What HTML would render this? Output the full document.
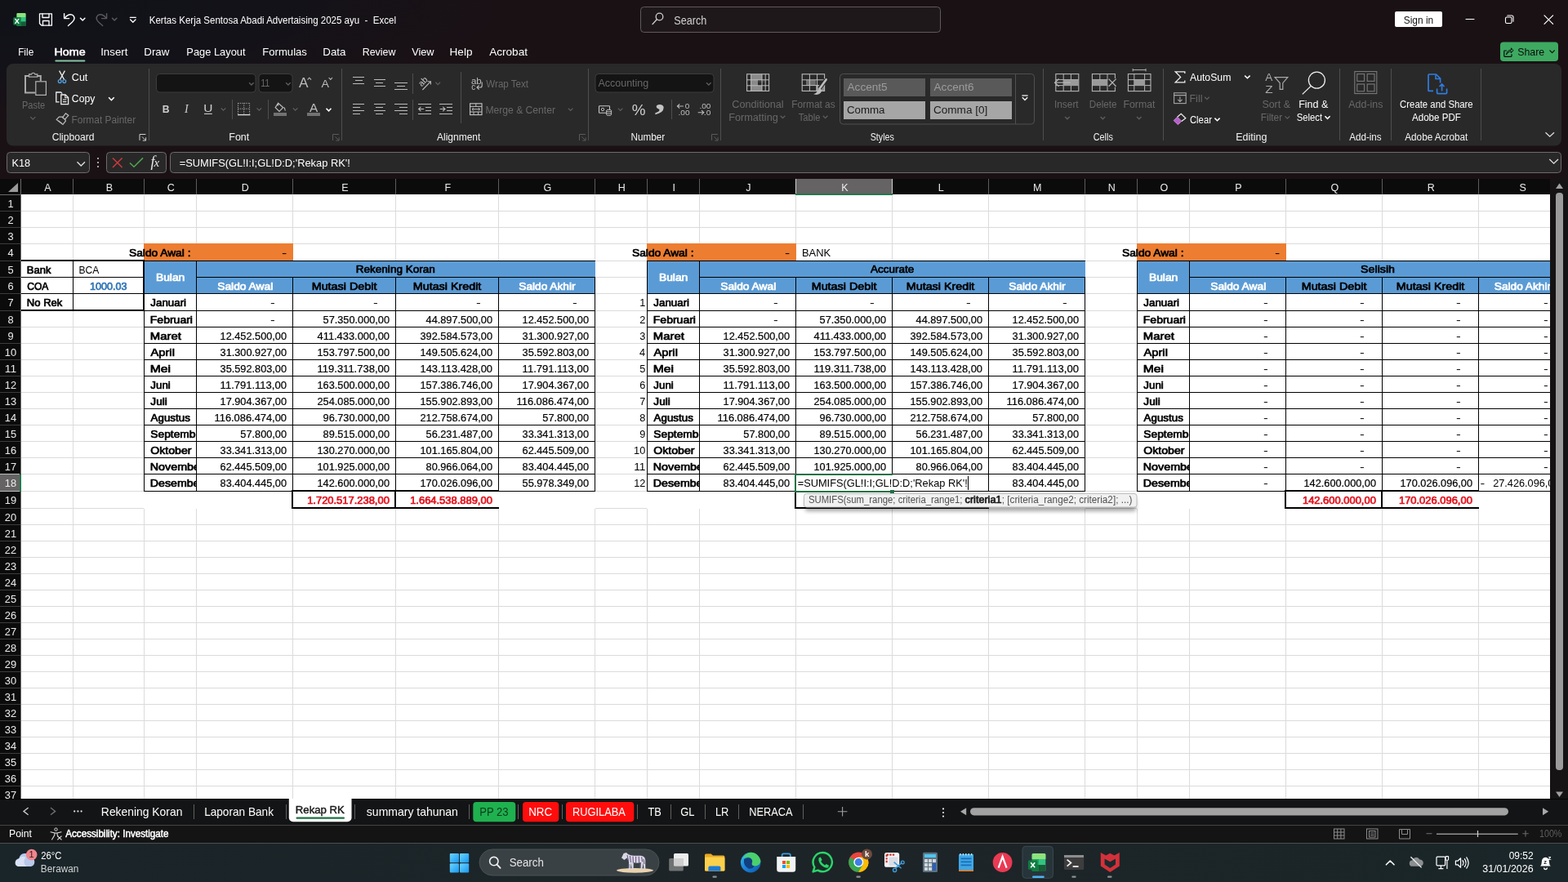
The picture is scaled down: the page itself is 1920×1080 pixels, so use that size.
<!DOCTYPE html>
<html lang="id"><head><meta charset="utf-8"><title>Kertas Kerja Sentosa Abadi Advertaising 2025 ayu - Excel</title>
<style>
html,body{margin:0;padding:0;background:#1a1115;width:1920px;height:1080px;overflow:hidden}
svg{display:block;position:absolute;left:0;top:0;will-change:transform}
text{font-family:"Liberation Sans", sans-serif;white-space:pre}
</style></head>
<body>
<svg width="1920" height="1080" viewBox="0 0 1920 1080">
<defs>
<radialGradient id="mica" cx="0" cy="0" r="1" gradientUnits="userSpaceOnUse" gradientTransform="translate(0 0) scale(620 150)"><stop offset="0" stop-color="#101218"/><stop offset="0.55" stop-color="#131219"/><stop offset="1" stop-color="#1a1115"/></radialGradient>
<clipPath id="c1"><rect x="26" y="238" width="1872" height="740"/></clipPath>
<clipPath id="c2"><rect x="177" y="359" width="63" height="242"/></clipPath>
<clipPath id="c3"><rect x="793" y="359" width="63" height="242"/></clipPath>
<clipPath id="c4"><rect x="1393" y="359" width="63" height="242"/></clipPath>
<filter id="tsh" x="-5%" y="-50%" width="110%" height="250%"><feGaussianBlur stdDeviation="2.6"/></filter>
<clipPath id="c5"><rect x="0" y="239" width="26" height="739"/></clipPath>
<linearGradient id="tb" x1="0" y1="0" x2="1" y2="0"><stop offset="0" stop-color="#1a2529"/><stop offset="0.55" stop-color="#1d2427"/><stop offset="1" stop-color="#1a2629"/></linearGradient>
<linearGradient id="win" x1="0" y1="0" x2="1" y2="1"><stop offset="0" stop-color="#6bd6ff"/><stop offset="1" stop-color="#1a96f0"/></linearGradient>
<linearGradient id="edg" x1="0" y1="0" x2="1" y2="1"><stop offset="0" stop-color="#35c1f1"/><stop offset="0.5" stop-color="#1b80d8"/><stop offset="1" stop-color="#0c59a4"/></linearGradient>
</defs>
<rect x="0" y="0" width="1920" height="1080" fill="#1a1115"/>
<rect x="0" y="0" width="700" height="180" fill="url(#mica)"/>
<g id="sheet">
<rect x="26" y="238" width="1872" height="740" fill="#ffffff" shape-rendering="crispEdges"/>
<g clip-path="url(#c1)">
<rect x="89" y="238" width="1" height="740" fill="#dbdbdb" shape-rendering="crispEdges"/>
<rect x="176" y="238" width="1" height="740" fill="#dbdbdb" shape-rendering="crispEdges"/>
<rect x="240" y="238" width="1" height="740" fill="#dbdbdb" shape-rendering="crispEdges"/>
<rect x="358" y="238" width="1" height="740" fill="#dbdbdb" shape-rendering="crispEdges"/>
<rect x="484" y="238" width="1" height="740" fill="#dbdbdb" shape-rendering="crispEdges"/>
<rect x="610" y="238" width="1" height="740" fill="#dbdbdb" shape-rendering="crispEdges"/>
<rect x="728" y="238" width="1" height="740" fill="#dbdbdb" shape-rendering="crispEdges"/>
<rect x="792" y="238" width="1" height="740" fill="#dbdbdb" shape-rendering="crispEdges"/>
<rect x="856" y="238" width="1" height="740" fill="#dbdbdb" shape-rendering="crispEdges"/>
<rect x="974" y="238" width="1" height="740" fill="#dbdbdb" shape-rendering="crispEdges"/>
<rect x="1092" y="238" width="1" height="740" fill="#dbdbdb" shape-rendering="crispEdges"/>
<rect x="1210" y="238" width="1" height="740" fill="#dbdbdb" shape-rendering="crispEdges"/>
<rect x="1328" y="238" width="1" height="740" fill="#dbdbdb" shape-rendering="crispEdges"/>
<rect x="1392" y="238" width="1" height="740" fill="#dbdbdb" shape-rendering="crispEdges"/>
<rect x="1456" y="238" width="1" height="740" fill="#dbdbdb" shape-rendering="crispEdges"/>
<rect x="1574" y="238" width="1" height="740" fill="#dbdbdb" shape-rendering="crispEdges"/>
<rect x="1692" y="238" width="1" height="740" fill="#dbdbdb" shape-rendering="crispEdges"/>
<rect x="1810" y="238" width="1" height="740" fill="#dbdbdb" shape-rendering="crispEdges"/>
<rect x="26" y="258" width="1872" height="1" fill="#dbdbdb" shape-rendering="crispEdges"/>
<rect x="26" y="278" width="1872" height="1" fill="#dbdbdb" shape-rendering="crispEdges"/>
<rect x="26" y="298" width="1872" height="1" fill="#dbdbdb" shape-rendering="crispEdges"/>
<rect x="26" y="319" width="1872" height="1" fill="#dbdbdb" shape-rendering="crispEdges"/>
<rect x="26" y="339" width="1872" height="1" fill="#dbdbdb" shape-rendering="crispEdges"/>
<rect x="26" y="359" width="1872" height="1" fill="#dbdbdb" shape-rendering="crispEdges"/>
<rect x="26" y="380" width="1872" height="1" fill="#dbdbdb" shape-rendering="crispEdges"/>
<rect x="26" y="400" width="1872" height="1" fill="#dbdbdb" shape-rendering="crispEdges"/>
<rect x="26" y="420" width="1872" height="1" fill="#dbdbdb" shape-rendering="crispEdges"/>
<rect x="26" y="440" width="1872" height="1" fill="#dbdbdb" shape-rendering="crispEdges"/>
<rect x="26" y="460" width="1872" height="1" fill="#dbdbdb" shape-rendering="crispEdges"/>
<rect x="26" y="480" width="1872" height="1" fill="#dbdbdb" shape-rendering="crispEdges"/>
<rect x="26" y="500" width="1872" height="1" fill="#dbdbdb" shape-rendering="crispEdges"/>
<rect x="26" y="520" width="1872" height="1" fill="#dbdbdb" shape-rendering="crispEdges"/>
<rect x="26" y="540" width="1872" height="1" fill="#dbdbdb" shape-rendering="crispEdges"/>
<rect x="26" y="560" width="1872" height="1" fill="#dbdbdb" shape-rendering="crispEdges"/>
<rect x="26" y="580" width="1872" height="1" fill="#dbdbdb" shape-rendering="crispEdges"/>
<rect x="26" y="601" width="1872" height="1" fill="#dbdbdb" shape-rendering="crispEdges"/>
<rect x="26" y="622" width="1872" height="1" fill="#dbdbdb" shape-rendering="crispEdges"/>
<rect x="26" y="642" width="1872" height="1" fill="#dbdbdb" shape-rendering="crispEdges"/>
<rect x="26" y="662" width="1872" height="1" fill="#dbdbdb" shape-rendering="crispEdges"/>
<rect x="26" y="682" width="1872" height="1" fill="#dbdbdb" shape-rendering="crispEdges"/>
<rect x="26" y="702" width="1872" height="1" fill="#dbdbdb" shape-rendering="crispEdges"/>
<rect x="26" y="722" width="1872" height="1" fill="#dbdbdb" shape-rendering="crispEdges"/>
<rect x="26" y="742" width="1872" height="1" fill="#dbdbdb" shape-rendering="crispEdges"/>
<rect x="26" y="762" width="1872" height="1" fill="#dbdbdb" shape-rendering="crispEdges"/>
<rect x="26" y="782" width="1872" height="1" fill="#dbdbdb" shape-rendering="crispEdges"/>
<rect x="26" y="802" width="1872" height="1" fill="#dbdbdb" shape-rendering="crispEdges"/>
<rect x="26" y="822" width="1872" height="1" fill="#dbdbdb" shape-rendering="crispEdges"/>
<rect x="26" y="842" width="1872" height="1" fill="#dbdbdb" shape-rendering="crispEdges"/>
<rect x="26" y="862" width="1872" height="1" fill="#dbdbdb" shape-rendering="crispEdges"/>
<rect x="26" y="882" width="1872" height="1" fill="#dbdbdb" shape-rendering="crispEdges"/>
<rect x="26" y="902" width="1872" height="1" fill="#dbdbdb" shape-rendering="crispEdges"/>
<rect x="26" y="922" width="1872" height="1" fill="#dbdbdb" shape-rendering="crispEdges"/>
<rect x="26" y="942" width="1872" height="1" fill="#dbdbdb" shape-rendering="crispEdges"/>
<rect x="26" y="962" width="1872" height="1" fill="#dbdbdb" shape-rendering="crispEdges"/>
<rect x="26" y="982" width="1872" height="1" fill="#dbdbdb" shape-rendering="crispEdges"/>
<rect x="176" y="602" width="553" height="21" fill="#ffffff" shape-rendering="crispEdges"/>
<rect x="792" y="602" width="537" height="21" fill="#ffffff" shape-rendering="crispEdges"/>
<rect x="1392" y="602" width="507" height="21" fill="#ffffff" shape-rendering="crispEdges"/>
<rect x="176" y="298" width="183" height="21" fill="#ed7d31" shape-rendering="crispEdges"/>
<rect x="792" y="298" width="183" height="21" fill="#ed7d31" shape-rendering="crispEdges"/>
<rect x="1392" y="298" width="183" height="21" fill="#ed7d31" shape-rendering="crispEdges"/>
<rect x="176" y="319" width="553" height="41" fill="#5b9bd5" shape-rendering="crispEdges"/>
<rect x="176" y="359" width="553" height="243" fill="#ffffff" shape-rendering="crispEdges"/>
<rect x="240" y="339" width="489" height="1" fill="#000000" shape-rendering="crispEdges"/>
<rect x="176" y="359" width="553" height="1" fill="#000000" shape-rendering="crispEdges"/>
<rect x="176" y="380" width="553" height="1" fill="#000000" shape-rendering="crispEdges"/>
<rect x="176" y="400" width="553" height="1" fill="#000000" shape-rendering="crispEdges"/>
<rect x="176" y="420" width="553" height="1" fill="#000000" shape-rendering="crispEdges"/>
<rect x="176" y="440" width="553" height="1" fill="#000000" shape-rendering="crispEdges"/>
<rect x="176" y="460" width="553" height="1" fill="#000000" shape-rendering="crispEdges"/>
<rect x="176" y="480" width="553" height="1" fill="#000000" shape-rendering="crispEdges"/>
<rect x="176" y="500" width="553" height="1" fill="#000000" shape-rendering="crispEdges"/>
<rect x="176" y="520" width="553" height="1" fill="#000000" shape-rendering="crispEdges"/>
<rect x="176" y="540" width="553" height="1" fill="#000000" shape-rendering="crispEdges"/>
<rect x="176" y="560" width="553" height="1" fill="#000000" shape-rendering="crispEdges"/>
<rect x="176" y="580" width="553" height="1" fill="#000000" shape-rendering="crispEdges"/>
<rect x="176" y="601" width="553" height="1" fill="#000000" shape-rendering="crispEdges"/>
<rect x="176" y="319" width="553" height="1" fill="#000000" shape-rendering="crispEdges"/>
<rect x="176" y="319" width="1" height="283" fill="#000000" shape-rendering="crispEdges"/>
<rect x="240" y="319" width="1" height="283" fill="#000000" shape-rendering="crispEdges"/>
<rect x="358" y="339" width="1" height="263" fill="#000000" shape-rendering="crispEdges"/>
<rect x="484" y="339" width="1" height="263" fill="#000000" shape-rendering="crispEdges"/>
<rect x="610" y="339" width="1" height="263" fill="#000000" shape-rendering="crispEdges"/>
<rect x="728" y="339" width="1" height="263" fill="#000000" shape-rendering="crispEdges"/>
<text x="190.92" y="343.8" font-size="13.2" fill="#fff" textLength="35.42" lengthAdjust="spacingAndGlyphs" stroke="#fff" stroke-width="0.72" stroke-linejoin="round">Bulan</text>
<text x="435.75" y="333.8" font-size="13.2" fill="#000" textLength="97.07" lengthAdjust="spacingAndGlyphs" stroke="#000" stroke-width="0.72" stroke-linejoin="round">Rekening Koran</text>
<text x="266.19" y="354.6" font-size="13.2" fill="#fff" textLength="68.11" lengthAdjust="spacingAndGlyphs" stroke="#fff" stroke-width="0.72" stroke-linejoin="round">Saldo Awal</text>
<text x="381.68" y="354.6" font-size="13.2" fill="#000" textLength="79.76" lengthAdjust="spacingAndGlyphs" stroke="#000" stroke-width="0.72" stroke-linejoin="round">Mutasi Debit</text>
<text x="505.79" y="354.6" font-size="13.2" fill="#000" textLength="83.56" lengthAdjust="spacingAndGlyphs" stroke="#000" stroke-width="0.72" stroke-linejoin="round">Mutasi Kredit</text>
<text x="635.30" y="354.6" font-size="13.2" fill="#fff" textLength="69.22" lengthAdjust="spacingAndGlyphs" stroke="#fff" stroke-width="0.72" stroke-linejoin="round">Saldo Akhir</text>
<text x="184.35" y="374.7" font-size="13.2" fill="#000" textLength="43.69" lengthAdjust="spacingAndGlyphs" clip-path="url(#c2)" stroke="#000" stroke-width="0.72" stroke-linejoin="round">Januari</text>
<text x="183.81" y="395.7" font-size="13.2" fill="#000" textLength="52.17" lengthAdjust="spacingAndGlyphs" clip-path="url(#c2)" stroke="#000" stroke-width="0.72" stroke-linejoin="round">Februari</text>
<text x="183.74" y="415.7" font-size="13.2" fill="#000" textLength="38.11" lengthAdjust="spacingAndGlyphs" clip-path="url(#c2)" stroke="#000" stroke-width="0.72" stroke-linejoin="round">Maret</text>
<text x="184.53" y="435.7" font-size="13.2" fill="#000" textLength="29.39" lengthAdjust="spacingAndGlyphs" clip-path="url(#c2)" stroke="#000" stroke-width="0.72" stroke-linejoin="round">April</text>
<text x="183.67" y="455.7" font-size="13.2" fill="#000" textLength="25.33" lengthAdjust="spacingAndGlyphs" clip-path="url(#c2)" stroke="#000" stroke-width="0.72" stroke-linejoin="round">Mei</text>
<text x="184.35" y="475.7" font-size="13.2" fill="#000" textLength="24.49" lengthAdjust="spacingAndGlyphs" clip-path="url(#c2)" stroke="#000" stroke-width="0.72" stroke-linejoin="round">Juni</text>
<text x="184.35" y="495.7" font-size="13.2" fill="#000" textLength="20.51" lengthAdjust="spacingAndGlyphs" clip-path="url(#c2)" stroke="#000" stroke-width="0.72" stroke-linejoin="round">Juli</text>
<text x="184.63" y="515.7" font-size="13.2" fill="#000" textLength="48.19" lengthAdjust="spacingAndGlyphs" clip-path="url(#c2)" stroke="#000" stroke-width="0.72" stroke-linejoin="round">Agustus</text>
<text x="184.33" y="535.7" font-size="13.2" fill="#000" textLength="67.47" lengthAdjust="spacingAndGlyphs" clip-path="url(#c2)" stroke="#000" stroke-width="0.72" stroke-linejoin="round">September</text>
<text x="184.29" y="555.7" font-size="13.2" fill="#000" textLength="50.18" lengthAdjust="spacingAndGlyphs" clip-path="url(#c2)" stroke="#000" stroke-width="0.72" stroke-linejoin="round">Oktober</text>
<text x="183.79" y="575.7" font-size="13.2" fill="#000" textLength="66.00" lengthAdjust="spacingAndGlyphs" clip-path="url(#c2)" stroke="#000" stroke-width="0.72" stroke-linejoin="round">November</text>
<text x="183.80" y="595.7" font-size="13.2" fill="#000" textLength="65.42" lengthAdjust="spacingAndGlyphs" clip-path="url(#c2)" stroke="#000" stroke-width="0.72" stroke-linejoin="round">Desember</text>
<text x="331.14" y="375.2" font-size="12.2" fill="#000" textLength="5.73" lengthAdjust="spacingAndGlyphs">-</text>
<text x="331.14" y="396.2" font-size="12.2" fill="#000" textLength="5.73" lengthAdjust="spacingAndGlyphs">-</text>
<text x="269.62" y="415.7" font-size="12.2" fill="#000" textLength="81.37" lengthAdjust="spacingAndGlyphs" stroke="#000" stroke-width="0.2" stroke-linejoin="round">12.452.500,00</text>
<text x="269.62" y="435.7" font-size="12.2" fill="#000" textLength="81.37" lengthAdjust="spacingAndGlyphs" stroke="#000" stroke-width="0.2" stroke-linejoin="round">31.300.927,00</text>
<text x="269.62" y="455.7" font-size="12.2" fill="#000" textLength="81.37" lengthAdjust="spacingAndGlyphs" stroke="#000" stroke-width="0.2" stroke-linejoin="round">35.592.803,00</text>
<text x="269.62" y="475.7" font-size="12.2" fill="#000" textLength="81.37" lengthAdjust="spacingAndGlyphs" stroke="#000" stroke-width="0.2" stroke-linejoin="round">11.791.113,00</text>
<text x="269.62" y="495.7" font-size="12.2" fill="#000" textLength="81.37" lengthAdjust="spacingAndGlyphs" stroke="#000" stroke-width="0.2" stroke-linejoin="round">17.904.367,00</text>
<text x="262.55" y="515.7" font-size="12.2" fill="#000" textLength="88.45" lengthAdjust="spacingAndGlyphs" stroke="#000" stroke-width="0.2" stroke-linejoin="round">116.086.474,00</text>
<text x="294.39" y="535.7" font-size="12.2" fill="#000" textLength="56.61" lengthAdjust="spacingAndGlyphs" stroke="#000" stroke-width="0.2" stroke-linejoin="round">57.800,00</text>
<text x="269.62" y="555.7" font-size="12.2" fill="#000" textLength="81.37" lengthAdjust="spacingAndGlyphs" stroke="#000" stroke-width="0.2" stroke-linejoin="round">33.341.313,00</text>
<text x="269.62" y="575.7" font-size="12.2" fill="#000" textLength="81.37" lengthAdjust="spacingAndGlyphs" stroke="#000" stroke-width="0.2" stroke-linejoin="round">62.445.509,00</text>
<text x="269.62" y="595.7" font-size="12.2" fill="#000" textLength="81.37" lengthAdjust="spacingAndGlyphs" stroke="#000" stroke-width="0.2" stroke-linejoin="round">83.404.445,00</text>
<text x="457.14" y="375.2" font-size="12.2" fill="#000" textLength="5.73" lengthAdjust="spacingAndGlyphs">-</text>
<text x="395.62" y="395.7" font-size="12.2" fill="#000" textLength="81.37" lengthAdjust="spacingAndGlyphs" stroke="#000" stroke-width="0.2" stroke-linejoin="round">57.350.000,00</text>
<text x="388.55" y="415.7" font-size="12.2" fill="#000" textLength="88.45" lengthAdjust="spacingAndGlyphs" stroke="#000" stroke-width="0.2" stroke-linejoin="round">411.433.000,00</text>
<text x="388.55" y="435.7" font-size="12.2" fill="#000" textLength="88.45" lengthAdjust="spacingAndGlyphs" stroke="#000" stroke-width="0.2" stroke-linejoin="round">153.797.500,00</text>
<text x="388.55" y="455.7" font-size="12.2" fill="#000" textLength="88.45" lengthAdjust="spacingAndGlyphs" stroke="#000" stroke-width="0.2" stroke-linejoin="round">119.311.738,00</text>
<text x="388.55" y="475.7" font-size="12.2" fill="#000" textLength="88.45" lengthAdjust="spacingAndGlyphs" stroke="#000" stroke-width="0.2" stroke-linejoin="round">163.500.000,00</text>
<text x="388.55" y="495.7" font-size="12.2" fill="#000" textLength="88.45" lengthAdjust="spacingAndGlyphs" stroke="#000" stroke-width="0.2" stroke-linejoin="round">254.085.000,00</text>
<text x="395.62" y="515.7" font-size="12.2" fill="#000" textLength="81.37" lengthAdjust="spacingAndGlyphs" stroke="#000" stroke-width="0.2" stroke-linejoin="round">96.730.000,00</text>
<text x="395.62" y="535.7" font-size="12.2" fill="#000" textLength="81.37" lengthAdjust="spacingAndGlyphs" stroke="#000" stroke-width="0.2" stroke-linejoin="round">89.515.000,00</text>
<text x="388.55" y="555.7" font-size="12.2" fill="#000" textLength="88.45" lengthAdjust="spacingAndGlyphs" stroke="#000" stroke-width="0.2" stroke-linejoin="round">130.270.000,00</text>
<text x="388.55" y="575.7" font-size="12.2" fill="#000" textLength="88.45" lengthAdjust="spacingAndGlyphs" stroke="#000" stroke-width="0.2" stroke-linejoin="round">101.925.000,00</text>
<text x="388.55" y="595.7" font-size="12.2" fill="#000" textLength="88.45" lengthAdjust="spacingAndGlyphs" stroke="#000" stroke-width="0.2" stroke-linejoin="round">142.600.000,00</text>
<text x="583.14" y="375.2" font-size="12.2" fill="#000" textLength="5.73" lengthAdjust="spacingAndGlyphs">-</text>
<text x="521.62" y="395.7" font-size="12.2" fill="#000" textLength="81.37" lengthAdjust="spacingAndGlyphs" stroke="#000" stroke-width="0.2" stroke-linejoin="round">44.897.500,00</text>
<text x="514.55" y="415.7" font-size="12.2" fill="#000" textLength="88.45" lengthAdjust="spacingAndGlyphs" stroke="#000" stroke-width="0.2" stroke-linejoin="round">392.584.573,00</text>
<text x="514.55" y="435.7" font-size="12.2" fill="#000" textLength="88.45" lengthAdjust="spacingAndGlyphs" stroke="#000" stroke-width="0.2" stroke-linejoin="round">149.505.624,00</text>
<text x="514.55" y="455.7" font-size="12.2" fill="#000" textLength="88.45" lengthAdjust="spacingAndGlyphs" stroke="#000" stroke-width="0.2" stroke-linejoin="round">143.113.428,00</text>
<text x="514.55" y="475.7" font-size="12.2" fill="#000" textLength="88.45" lengthAdjust="spacingAndGlyphs" stroke="#000" stroke-width="0.2" stroke-linejoin="round">157.386.746,00</text>
<text x="514.55" y="495.7" font-size="12.2" fill="#000" textLength="88.45" lengthAdjust="spacingAndGlyphs" stroke="#000" stroke-width="0.2" stroke-linejoin="round">155.902.893,00</text>
<text x="514.55" y="515.7" font-size="12.2" fill="#000" textLength="88.45" lengthAdjust="spacingAndGlyphs" stroke="#000" stroke-width="0.2" stroke-linejoin="round">212.758.674,00</text>
<text x="521.62" y="535.7" font-size="12.2" fill="#000" textLength="81.37" lengthAdjust="spacingAndGlyphs" stroke="#000" stroke-width="0.2" stroke-linejoin="round">56.231.487,00</text>
<text x="514.55" y="555.7" font-size="12.2" fill="#000" textLength="88.45" lengthAdjust="spacingAndGlyphs" stroke="#000" stroke-width="0.2" stroke-linejoin="round">101.165.804,00</text>
<text x="521.62" y="575.7" font-size="12.2" fill="#000" textLength="81.37" lengthAdjust="spacingAndGlyphs" stroke="#000" stroke-width="0.2" stroke-linejoin="round">80.966.064,00</text>
<text x="514.55" y="595.7" font-size="12.2" fill="#000" textLength="88.45" lengthAdjust="spacingAndGlyphs" stroke="#000" stroke-width="0.2" stroke-linejoin="round">170.026.096,00</text>
<text x="701.14" y="375.2" font-size="12.2" fill="#000" textLength="5.73" lengthAdjust="spacingAndGlyphs">-</text>
<text x="639.62" y="395.7" font-size="12.2" fill="#000" textLength="81.37" lengthAdjust="spacingAndGlyphs" stroke="#000" stroke-width="0.2" stroke-linejoin="round">12.452.500,00</text>
<text x="639.62" y="415.7" font-size="12.2" fill="#000" textLength="81.37" lengthAdjust="spacingAndGlyphs" stroke="#000" stroke-width="0.2" stroke-linejoin="round">31.300.927,00</text>
<text x="639.62" y="435.7" font-size="12.2" fill="#000" textLength="81.37" lengthAdjust="spacingAndGlyphs" stroke="#000" stroke-width="0.2" stroke-linejoin="round">35.592.803,00</text>
<text x="639.62" y="455.7" font-size="12.2" fill="#000" textLength="81.37" lengthAdjust="spacingAndGlyphs" stroke="#000" stroke-width="0.2" stroke-linejoin="round">11.791.113,00</text>
<text x="639.62" y="475.7" font-size="12.2" fill="#000" textLength="81.37" lengthAdjust="spacingAndGlyphs" stroke="#000" stroke-width="0.2" stroke-linejoin="round">17.904.367,00</text>
<text x="632.55" y="495.7" font-size="12.2" fill="#000" textLength="88.45" lengthAdjust="spacingAndGlyphs" stroke="#000" stroke-width="0.2" stroke-linejoin="round">116.086.474,00</text>
<text x="664.39" y="515.7" font-size="12.2" fill="#000" textLength="56.61" lengthAdjust="spacingAndGlyphs" stroke="#000" stroke-width="0.2" stroke-linejoin="round">57.800,00</text>
<text x="639.62" y="535.7" font-size="12.2" fill="#000" textLength="81.37" lengthAdjust="spacingAndGlyphs" stroke="#000" stroke-width="0.2" stroke-linejoin="round">33.341.313,00</text>
<text x="639.62" y="555.7" font-size="12.2" fill="#000" textLength="81.37" lengthAdjust="spacingAndGlyphs" stroke="#000" stroke-width="0.2" stroke-linejoin="round">62.445.509,00</text>
<text x="639.62" y="575.7" font-size="12.2" fill="#000" textLength="81.37" lengthAdjust="spacingAndGlyphs" stroke="#000" stroke-width="0.2" stroke-linejoin="round">83.404.445,00</text>
<text x="639.62" y="595.7" font-size="12.2" fill="#000" textLength="81.37" lengthAdjust="spacingAndGlyphs" stroke="#000" stroke-width="0.2" stroke-linejoin="round">55.978.349,00</text>
<rect x="357" y="600" width="254" height="2" fill="#000000" shape-rendering="crispEdges"/>
<rect x="357" y="621" width="254" height="2" fill="#000000" shape-rendering="crispEdges"/>
<rect x="357" y="601" width="2" height="21" fill="#000000" shape-rendering="crispEdges"/>
<rect x="483" y="601" width="2" height="21" fill="#000000" shape-rendering="crispEdges"/>
<text x="376.16" y="616.7" font-size="12.4" fill="#e4141f" textLength="100.69" lengthAdjust="spacingAndGlyphs" stroke="#e4141f" stroke-width="0.72" stroke-linejoin="round">1.720.517.238,00</text>
<text x="502.16" y="616.7" font-size="12.4" fill="#e4141f" textLength="100.69" lengthAdjust="spacingAndGlyphs" stroke="#e4141f" stroke-width="0.72" stroke-linejoin="round">1.664.538.889,00</text>
<rect x="792" y="319" width="537" height="41" fill="#5b9bd5" shape-rendering="crispEdges"/>
<rect x="792" y="359" width="537" height="243" fill="#ffffff" shape-rendering="crispEdges"/>
<rect x="856" y="339" width="473" height="1" fill="#000000" shape-rendering="crispEdges"/>
<rect x="792" y="359" width="537" height="1" fill="#000000" shape-rendering="crispEdges"/>
<rect x="792" y="380" width="537" height="1" fill="#000000" shape-rendering="crispEdges"/>
<rect x="792" y="400" width="537" height="1" fill="#000000" shape-rendering="crispEdges"/>
<rect x="792" y="420" width="537" height="1" fill="#000000" shape-rendering="crispEdges"/>
<rect x="792" y="440" width="537" height="1" fill="#000000" shape-rendering="crispEdges"/>
<rect x="792" y="460" width="537" height="1" fill="#000000" shape-rendering="crispEdges"/>
<rect x="792" y="480" width="537" height="1" fill="#000000" shape-rendering="crispEdges"/>
<rect x="792" y="500" width="537" height="1" fill="#000000" shape-rendering="crispEdges"/>
<rect x="792" y="520" width="537" height="1" fill="#000000" shape-rendering="crispEdges"/>
<rect x="792" y="540" width="537" height="1" fill="#000000" shape-rendering="crispEdges"/>
<rect x="792" y="560" width="537" height="1" fill="#000000" shape-rendering="crispEdges"/>
<rect x="792" y="580" width="537" height="1" fill="#000000" shape-rendering="crispEdges"/>
<rect x="792" y="601" width="537" height="1" fill="#000000" shape-rendering="crispEdges"/>
<rect x="792" y="319" width="537" height="1" fill="#000000" shape-rendering="crispEdges"/>
<rect x="792" y="319" width="1" height="283" fill="#000000" shape-rendering="crispEdges"/>
<rect x="856" y="319" width="1" height="283" fill="#000000" shape-rendering="crispEdges"/>
<rect x="974" y="339" width="1" height="263" fill="#000000" shape-rendering="crispEdges"/>
<rect x="1092" y="339" width="1" height="263" fill="#000000" shape-rendering="crispEdges"/>
<rect x="1210" y="339" width="1" height="263" fill="#000000" shape-rendering="crispEdges"/>
<rect x="1328" y="339" width="1" height="263" fill="#000000" shape-rendering="crispEdges"/>
<text x="806.92" y="343.8" font-size="13.2" fill="#fff" textLength="35.42" lengthAdjust="spacingAndGlyphs" stroke="#fff" stroke-width="0.72" stroke-linejoin="round">Bulan</text>
<text x="1066.08" y="333.8" font-size="13.2" fill="#000" textLength="53.21" lengthAdjust="spacingAndGlyphs" stroke="#000" stroke-width="0.72" stroke-linejoin="round">Accurate</text>
<text x="882.19" y="354.6" font-size="13.2" fill="#fff" textLength="68.11" lengthAdjust="spacingAndGlyphs" stroke="#fff" stroke-width="0.72" stroke-linejoin="round">Saldo Awal</text>
<text x="993.68" y="354.6" font-size="13.2" fill="#000" textLength="79.76" lengthAdjust="spacingAndGlyphs" stroke="#000" stroke-width="0.72" stroke-linejoin="round">Mutasi Debit</text>
<text x="1109.79" y="354.6" font-size="13.2" fill="#000" textLength="83.56" lengthAdjust="spacingAndGlyphs" stroke="#000" stroke-width="0.72" stroke-linejoin="round">Mutasi Kredit</text>
<text x="1235.30" y="354.6" font-size="13.2" fill="#fff" textLength="69.22" lengthAdjust="spacingAndGlyphs" stroke="#fff" stroke-width="0.72" stroke-linejoin="round">Saldo Akhir</text>
<text x="800.35" y="374.7" font-size="13.2" fill="#000" textLength="43.69" lengthAdjust="spacingAndGlyphs" clip-path="url(#c3)" stroke="#000" stroke-width="0.72" stroke-linejoin="round">Januari</text>
<text x="799.81" y="395.7" font-size="13.2" fill="#000" textLength="52.17" lengthAdjust="spacingAndGlyphs" clip-path="url(#c3)" stroke="#000" stroke-width="0.72" stroke-linejoin="round">Februari</text>
<text x="799.74" y="415.7" font-size="13.2" fill="#000" textLength="38.11" lengthAdjust="spacingAndGlyphs" clip-path="url(#c3)" stroke="#000" stroke-width="0.72" stroke-linejoin="round">Maret</text>
<text x="800.53" y="435.7" font-size="13.2" fill="#000" textLength="29.39" lengthAdjust="spacingAndGlyphs" clip-path="url(#c3)" stroke="#000" stroke-width="0.72" stroke-linejoin="round">April</text>
<text x="799.67" y="455.7" font-size="13.2" fill="#000" textLength="25.33" lengthAdjust="spacingAndGlyphs" clip-path="url(#c3)" stroke="#000" stroke-width="0.72" stroke-linejoin="round">Mei</text>
<text x="800.35" y="475.7" font-size="13.2" fill="#000" textLength="24.49" lengthAdjust="spacingAndGlyphs" clip-path="url(#c3)" stroke="#000" stroke-width="0.72" stroke-linejoin="round">Juni</text>
<text x="800.35" y="495.7" font-size="13.2" fill="#000" textLength="20.51" lengthAdjust="spacingAndGlyphs" clip-path="url(#c3)" stroke="#000" stroke-width="0.72" stroke-linejoin="round">Juli</text>
<text x="800.63" y="515.7" font-size="13.2" fill="#000" textLength="48.19" lengthAdjust="spacingAndGlyphs" clip-path="url(#c3)" stroke="#000" stroke-width="0.72" stroke-linejoin="round">Agustus</text>
<text x="800.33" y="535.7" font-size="13.2" fill="#000" textLength="67.47" lengthAdjust="spacingAndGlyphs" clip-path="url(#c3)" stroke="#000" stroke-width="0.72" stroke-linejoin="round">September</text>
<text x="800.29" y="555.7" font-size="13.2" fill="#000" textLength="50.18" lengthAdjust="spacingAndGlyphs" clip-path="url(#c3)" stroke="#000" stroke-width="0.72" stroke-linejoin="round">Oktober</text>
<text x="799.79" y="575.7" font-size="13.2" fill="#000" textLength="66.00" lengthAdjust="spacingAndGlyphs" clip-path="url(#c3)" stroke="#000" stroke-width="0.72" stroke-linejoin="round">November</text>
<text x="799.80" y="595.7" font-size="13.2" fill="#000" textLength="65.42" lengthAdjust="spacingAndGlyphs" clip-path="url(#c3)" stroke="#000" stroke-width="0.72" stroke-linejoin="round">Desember</text>
<text x="947.14" y="375.2" font-size="12.2" fill="#000" textLength="5.73" lengthAdjust="spacingAndGlyphs">-</text>
<text x="947.14" y="396.2" font-size="12.2" fill="#000" textLength="5.73" lengthAdjust="spacingAndGlyphs">-</text>
<text x="885.62" y="415.7" font-size="12.2" fill="#000" textLength="81.37" lengthAdjust="spacingAndGlyphs" stroke="#000" stroke-width="0.2" stroke-linejoin="round">12.452.500,00</text>
<text x="885.62" y="435.7" font-size="12.2" fill="#000" textLength="81.37" lengthAdjust="spacingAndGlyphs" stroke="#000" stroke-width="0.2" stroke-linejoin="round">31.300.927,00</text>
<text x="885.62" y="455.7" font-size="12.2" fill="#000" textLength="81.37" lengthAdjust="spacingAndGlyphs" stroke="#000" stroke-width="0.2" stroke-linejoin="round">35.592.803,00</text>
<text x="885.62" y="475.7" font-size="12.2" fill="#000" textLength="81.37" lengthAdjust="spacingAndGlyphs" stroke="#000" stroke-width="0.2" stroke-linejoin="round">11.791.113,00</text>
<text x="885.62" y="495.7" font-size="12.2" fill="#000" textLength="81.37" lengthAdjust="spacingAndGlyphs" stroke="#000" stroke-width="0.2" stroke-linejoin="round">17.904.367,00</text>
<text x="878.55" y="515.7" font-size="12.2" fill="#000" textLength="88.45" lengthAdjust="spacingAndGlyphs" stroke="#000" stroke-width="0.2" stroke-linejoin="round">116.086.474,00</text>
<text x="910.39" y="535.7" font-size="12.2" fill="#000" textLength="56.61" lengthAdjust="spacingAndGlyphs" stroke="#000" stroke-width="0.2" stroke-linejoin="round">57.800,00</text>
<text x="885.62" y="555.7" font-size="12.2" fill="#000" textLength="81.37" lengthAdjust="spacingAndGlyphs" stroke="#000" stroke-width="0.2" stroke-linejoin="round">33.341.313,00</text>
<text x="885.62" y="575.7" font-size="12.2" fill="#000" textLength="81.37" lengthAdjust="spacingAndGlyphs" stroke="#000" stroke-width="0.2" stroke-linejoin="round">62.445.509,00</text>
<text x="885.62" y="595.7" font-size="12.2" fill="#000" textLength="81.37" lengthAdjust="spacingAndGlyphs" stroke="#000" stroke-width="0.2" stroke-linejoin="round">83.404.445,00</text>
<text x="1065.14" y="375.2" font-size="12.2" fill="#000" textLength="5.73" lengthAdjust="spacingAndGlyphs">-</text>
<text x="1003.62" y="395.7" font-size="12.2" fill="#000" textLength="81.37" lengthAdjust="spacingAndGlyphs" stroke="#000" stroke-width="0.2" stroke-linejoin="round">57.350.000,00</text>
<text x="996.55" y="415.7" font-size="12.2" fill="#000" textLength="88.45" lengthAdjust="spacingAndGlyphs" stroke="#000" stroke-width="0.2" stroke-linejoin="round">411.433.000,00</text>
<text x="996.55" y="435.7" font-size="12.2" fill="#000" textLength="88.45" lengthAdjust="spacingAndGlyphs" stroke="#000" stroke-width="0.2" stroke-linejoin="round">153.797.500,00</text>
<text x="996.55" y="455.7" font-size="12.2" fill="#000" textLength="88.45" lengthAdjust="spacingAndGlyphs" stroke="#000" stroke-width="0.2" stroke-linejoin="round">119.311.738,00</text>
<text x="996.55" y="475.7" font-size="12.2" fill="#000" textLength="88.45" lengthAdjust="spacingAndGlyphs" stroke="#000" stroke-width="0.2" stroke-linejoin="round">163.500.000,00</text>
<text x="996.55" y="495.7" font-size="12.2" fill="#000" textLength="88.45" lengthAdjust="spacingAndGlyphs" stroke="#000" stroke-width="0.2" stroke-linejoin="round">254.085.000,00</text>
<text x="1003.62" y="515.7" font-size="12.2" fill="#000" textLength="81.37" lengthAdjust="spacingAndGlyphs" stroke="#000" stroke-width="0.2" stroke-linejoin="round">96.730.000,00</text>
<text x="1003.62" y="535.7" font-size="12.2" fill="#000" textLength="81.37" lengthAdjust="spacingAndGlyphs" stroke="#000" stroke-width="0.2" stroke-linejoin="round">89.515.000,00</text>
<text x="996.55" y="555.7" font-size="12.2" fill="#000" textLength="88.45" lengthAdjust="spacingAndGlyphs" stroke="#000" stroke-width="0.2" stroke-linejoin="round">130.270.000,00</text>
<text x="996.55" y="575.7" font-size="12.2" fill="#000" textLength="88.45" lengthAdjust="spacingAndGlyphs" stroke="#000" stroke-width="0.2" stroke-linejoin="round">101.925.000,00</text>
<text x="1183.14" y="375.2" font-size="12.2" fill="#000" textLength="5.73" lengthAdjust="spacingAndGlyphs">-</text>
<text x="1121.62" y="395.7" font-size="12.2" fill="#000" textLength="81.37" lengthAdjust="spacingAndGlyphs" stroke="#000" stroke-width="0.2" stroke-linejoin="round">44.897.500,00</text>
<text x="1114.55" y="415.7" font-size="12.2" fill="#000" textLength="88.45" lengthAdjust="spacingAndGlyphs" stroke="#000" stroke-width="0.2" stroke-linejoin="round">392.584.573,00</text>
<text x="1114.55" y="435.7" font-size="12.2" fill="#000" textLength="88.45" lengthAdjust="spacingAndGlyphs" stroke="#000" stroke-width="0.2" stroke-linejoin="round">149.505.624,00</text>
<text x="1114.55" y="455.7" font-size="12.2" fill="#000" textLength="88.45" lengthAdjust="spacingAndGlyphs" stroke="#000" stroke-width="0.2" stroke-linejoin="round">143.113.428,00</text>
<text x="1114.55" y="475.7" font-size="12.2" fill="#000" textLength="88.45" lengthAdjust="spacingAndGlyphs" stroke="#000" stroke-width="0.2" stroke-linejoin="round">157.386.746,00</text>
<text x="1114.55" y="495.7" font-size="12.2" fill="#000" textLength="88.45" lengthAdjust="spacingAndGlyphs" stroke="#000" stroke-width="0.2" stroke-linejoin="round">155.902.893,00</text>
<text x="1114.55" y="515.7" font-size="12.2" fill="#000" textLength="88.45" lengthAdjust="spacingAndGlyphs" stroke="#000" stroke-width="0.2" stroke-linejoin="round">212.758.674,00</text>
<text x="1121.62" y="535.7" font-size="12.2" fill="#000" textLength="81.37" lengthAdjust="spacingAndGlyphs" stroke="#000" stroke-width="0.2" stroke-linejoin="round">56.231.487,00</text>
<text x="1114.55" y="555.7" font-size="12.2" fill="#000" textLength="88.45" lengthAdjust="spacingAndGlyphs" stroke="#000" stroke-width="0.2" stroke-linejoin="round">101.165.804,00</text>
<text x="1121.62" y="575.7" font-size="12.2" fill="#000" textLength="81.37" lengthAdjust="spacingAndGlyphs" stroke="#000" stroke-width="0.2" stroke-linejoin="round">80.966.064,00</text>
<text x="1301.14" y="375.2" font-size="12.2" fill="#000" textLength="5.73" lengthAdjust="spacingAndGlyphs">-</text>
<text x="1239.62" y="395.7" font-size="12.2" fill="#000" textLength="81.37" lengthAdjust="spacingAndGlyphs" stroke="#000" stroke-width="0.2" stroke-linejoin="round">12.452.500,00</text>
<text x="1239.62" y="415.7" font-size="12.2" fill="#000" textLength="81.37" lengthAdjust="spacingAndGlyphs" stroke="#000" stroke-width="0.2" stroke-linejoin="round">31.300.927,00</text>
<text x="1239.62" y="435.7" font-size="12.2" fill="#000" textLength="81.37" lengthAdjust="spacingAndGlyphs" stroke="#000" stroke-width="0.2" stroke-linejoin="round">35.592.803,00</text>
<text x="1239.62" y="455.7" font-size="12.2" fill="#000" textLength="81.37" lengthAdjust="spacingAndGlyphs" stroke="#000" stroke-width="0.2" stroke-linejoin="round">11.791.113,00</text>
<text x="1239.62" y="475.7" font-size="12.2" fill="#000" textLength="81.37" lengthAdjust="spacingAndGlyphs" stroke="#000" stroke-width="0.2" stroke-linejoin="round">17.904.367,00</text>
<text x="1232.55" y="495.7" font-size="12.2" fill="#000" textLength="88.45" lengthAdjust="spacingAndGlyphs" stroke="#000" stroke-width="0.2" stroke-linejoin="round">116.086.474,00</text>
<text x="1264.39" y="515.7" font-size="12.2" fill="#000" textLength="56.61" lengthAdjust="spacingAndGlyphs" stroke="#000" stroke-width="0.2" stroke-linejoin="round">57.800,00</text>
<text x="1239.62" y="535.7" font-size="12.2" fill="#000" textLength="81.37" lengthAdjust="spacingAndGlyphs" stroke="#000" stroke-width="0.2" stroke-linejoin="round">33.341.313,00</text>
<text x="1239.62" y="555.7" font-size="12.2" fill="#000" textLength="81.37" lengthAdjust="spacingAndGlyphs" stroke="#000" stroke-width="0.2" stroke-linejoin="round">62.445.509,00</text>
<text x="1239.62" y="575.7" font-size="12.2" fill="#000" textLength="81.37" lengthAdjust="spacingAndGlyphs" stroke="#000" stroke-width="0.2" stroke-linejoin="round">83.404.445,00</text>
<text x="1239.62" y="595.7" font-size="12.2" fill="#000" textLength="81.37" lengthAdjust="spacingAndGlyphs" stroke="#000" stroke-width="0.2" stroke-linejoin="round">83.404.445,00</text>
<rect x="1392" y="319" width="509" height="41" fill="#5b9bd5" shape-rendering="crispEdges"/>
<rect x="1392" y="359" width="509" height="243" fill="#ffffff" shape-rendering="crispEdges"/>
<rect x="1456" y="339" width="445" height="1" fill="#000000" shape-rendering="crispEdges"/>
<rect x="1392" y="359" width="509" height="1" fill="#000000" shape-rendering="crispEdges"/>
<rect x="1392" y="380" width="509" height="1" fill="#000000" shape-rendering="crispEdges"/>
<rect x="1392" y="400" width="509" height="1" fill="#000000" shape-rendering="crispEdges"/>
<rect x="1392" y="420" width="509" height="1" fill="#000000" shape-rendering="crispEdges"/>
<rect x="1392" y="440" width="509" height="1" fill="#000000" shape-rendering="crispEdges"/>
<rect x="1392" y="460" width="509" height="1" fill="#000000" shape-rendering="crispEdges"/>
<rect x="1392" y="480" width="509" height="1" fill="#000000" shape-rendering="crispEdges"/>
<rect x="1392" y="500" width="509" height="1" fill="#000000" shape-rendering="crispEdges"/>
<rect x="1392" y="520" width="509" height="1" fill="#000000" shape-rendering="crispEdges"/>
<rect x="1392" y="540" width="509" height="1" fill="#000000" shape-rendering="crispEdges"/>
<rect x="1392" y="560" width="509" height="1" fill="#000000" shape-rendering="crispEdges"/>
<rect x="1392" y="580" width="509" height="1" fill="#000000" shape-rendering="crispEdges"/>
<rect x="1392" y="601" width="509" height="1" fill="#000000" shape-rendering="crispEdges"/>
<rect x="1392" y="319" width="509" height="1" fill="#000000" shape-rendering="crispEdges"/>
<rect x="1392" y="319" width="1" height="283" fill="#000000" shape-rendering="crispEdges"/>
<rect x="1456" y="319" width="1" height="283" fill="#000000" shape-rendering="crispEdges"/>
<rect x="1574" y="339" width="1" height="263" fill="#000000" shape-rendering="crispEdges"/>
<rect x="1692" y="339" width="1" height="263" fill="#000000" shape-rendering="crispEdges"/>
<rect x="1810" y="339" width="1" height="263" fill="#000000" shape-rendering="crispEdges"/>
<rect x="1917" y="339" width="1" height="263" fill="#000000" shape-rendering="crispEdges"/>
<text x="1406.92" y="343.8" font-size="13.2" fill="#fff" textLength="35.42" lengthAdjust="spacingAndGlyphs" stroke="#fff" stroke-width="0.72" stroke-linejoin="round">Bulan</text>
<text x="1666.11" y="333.8" font-size="13.2" fill="#000" textLength="41.85" lengthAdjust="spacingAndGlyphs" stroke="#000" stroke-width="0.72" stroke-linejoin="round">Selisih</text>
<text x="1482.19" y="354.6" font-size="13.2" fill="#fff" textLength="68.11" lengthAdjust="spacingAndGlyphs" stroke="#fff" stroke-width="0.72" stroke-linejoin="round">Saldo Awal</text>
<text x="1593.68" y="354.6" font-size="13.2" fill="#000" textLength="79.76" lengthAdjust="spacingAndGlyphs" stroke="#000" stroke-width="0.72" stroke-linejoin="round">Mutasi Debit</text>
<text x="1709.79" y="354.6" font-size="13.2" fill="#000" textLength="83.56" lengthAdjust="spacingAndGlyphs" stroke="#000" stroke-width="0.72" stroke-linejoin="round">Mutasi Kredit</text>
<text x="1829.80" y="354.6" font-size="13.2" fill="#fff" textLength="69.22" lengthAdjust="spacingAndGlyphs" stroke="#fff" stroke-width="0.72" stroke-linejoin="round">Saldo Akhir</text>
<text x="1400.35" y="374.7" font-size="13.2" fill="#000" textLength="43.69" lengthAdjust="spacingAndGlyphs" clip-path="url(#c4)" stroke="#000" stroke-width="0.72" stroke-linejoin="round">Januari</text>
<text x="1399.81" y="395.7" font-size="13.2" fill="#000" textLength="52.17" lengthAdjust="spacingAndGlyphs" clip-path="url(#c4)" stroke="#000" stroke-width="0.72" stroke-linejoin="round">Februari</text>
<text x="1399.74" y="415.7" font-size="13.2" fill="#000" textLength="38.11" lengthAdjust="spacingAndGlyphs" clip-path="url(#c4)" stroke="#000" stroke-width="0.72" stroke-linejoin="round">Maret</text>
<text x="1400.53" y="435.7" font-size="13.2" fill="#000" textLength="29.39" lengthAdjust="spacingAndGlyphs" clip-path="url(#c4)" stroke="#000" stroke-width="0.72" stroke-linejoin="round">April</text>
<text x="1399.67" y="455.7" font-size="13.2" fill="#000" textLength="25.33" lengthAdjust="spacingAndGlyphs" clip-path="url(#c4)" stroke="#000" stroke-width="0.72" stroke-linejoin="round">Mei</text>
<text x="1400.35" y="475.7" font-size="13.2" fill="#000" textLength="24.49" lengthAdjust="spacingAndGlyphs" clip-path="url(#c4)" stroke="#000" stroke-width="0.72" stroke-linejoin="round">Juni</text>
<text x="1400.35" y="495.7" font-size="13.2" fill="#000" textLength="20.51" lengthAdjust="spacingAndGlyphs" clip-path="url(#c4)" stroke="#000" stroke-width="0.72" stroke-linejoin="round">Juli</text>
<text x="1400.63" y="515.7" font-size="13.2" fill="#000" textLength="48.19" lengthAdjust="spacingAndGlyphs" clip-path="url(#c4)" stroke="#000" stroke-width="0.72" stroke-linejoin="round">Agustus</text>
<text x="1400.33" y="535.7" font-size="13.2" fill="#000" textLength="67.47" lengthAdjust="spacingAndGlyphs" clip-path="url(#c4)" stroke="#000" stroke-width="0.72" stroke-linejoin="round">September</text>
<text x="1400.29" y="555.7" font-size="13.2" fill="#000" textLength="50.18" lengthAdjust="spacingAndGlyphs" clip-path="url(#c4)" stroke="#000" stroke-width="0.72" stroke-linejoin="round">Oktober</text>
<text x="1399.79" y="575.7" font-size="13.2" fill="#000" textLength="66.00" lengthAdjust="spacingAndGlyphs" clip-path="url(#c4)" stroke="#000" stroke-width="0.72" stroke-linejoin="round">November</text>
<text x="1399.80" y="595.7" font-size="13.2" fill="#000" textLength="65.42" lengthAdjust="spacingAndGlyphs" clip-path="url(#c4)" stroke="#000" stroke-width="0.72" stroke-linejoin="round">Desember</text>
<text x="1547.14" y="375.2" font-size="12.2" fill="#000" textLength="5.73" lengthAdjust="spacingAndGlyphs">-</text>
<text x="1547.14" y="396.2" font-size="12.2" fill="#000" textLength="5.73" lengthAdjust="spacingAndGlyphs">-</text>
<text x="1547.14" y="416.2" font-size="12.2" fill="#000" textLength="5.73" lengthAdjust="spacingAndGlyphs">-</text>
<text x="1547.14" y="436.2" font-size="12.2" fill="#000" textLength="5.73" lengthAdjust="spacingAndGlyphs">-</text>
<text x="1547.14" y="456.2" font-size="12.2" fill="#000" textLength="5.73" lengthAdjust="spacingAndGlyphs">-</text>
<text x="1547.14" y="476.2" font-size="12.2" fill="#000" textLength="5.73" lengthAdjust="spacingAndGlyphs">-</text>
<text x="1547.14" y="496.2" font-size="12.2" fill="#000" textLength="5.73" lengthAdjust="spacingAndGlyphs">-</text>
<text x="1547.14" y="516.2" font-size="12.2" fill="#000" textLength="5.73" lengthAdjust="spacingAndGlyphs">-</text>
<text x="1547.14" y="536.2" font-size="12.2" fill="#000" textLength="5.73" lengthAdjust="spacingAndGlyphs">-</text>
<text x="1547.14" y="556.2" font-size="12.2" fill="#000" textLength="5.73" lengthAdjust="spacingAndGlyphs">-</text>
<text x="1547.14" y="576.2" font-size="12.2" fill="#000" textLength="5.73" lengthAdjust="spacingAndGlyphs">-</text>
<text x="1547.14" y="596.2" font-size="12.2" fill="#000" textLength="5.73" lengthAdjust="spacingAndGlyphs">-</text>
<text x="1665.14" y="375.2" font-size="12.2" fill="#000" textLength="5.73" lengthAdjust="spacingAndGlyphs">-</text>
<text x="1665.14" y="396.2" font-size="12.2" fill="#000" textLength="5.73" lengthAdjust="spacingAndGlyphs">-</text>
<text x="1665.14" y="416.2" font-size="12.2" fill="#000" textLength="5.73" lengthAdjust="spacingAndGlyphs">-</text>
<text x="1665.14" y="436.2" font-size="12.2" fill="#000" textLength="5.73" lengthAdjust="spacingAndGlyphs">-</text>
<text x="1665.14" y="456.2" font-size="12.2" fill="#000" textLength="5.73" lengthAdjust="spacingAndGlyphs">-</text>
<text x="1665.14" y="476.2" font-size="12.2" fill="#000" textLength="5.73" lengthAdjust="spacingAndGlyphs">-</text>
<text x="1665.14" y="496.2" font-size="12.2" fill="#000" textLength="5.73" lengthAdjust="spacingAndGlyphs">-</text>
<text x="1665.14" y="516.2" font-size="12.2" fill="#000" textLength="5.73" lengthAdjust="spacingAndGlyphs">-</text>
<text x="1665.14" y="536.2" font-size="12.2" fill="#000" textLength="5.73" lengthAdjust="spacingAndGlyphs">-</text>
<text x="1665.14" y="556.2" font-size="12.2" fill="#000" textLength="5.73" lengthAdjust="spacingAndGlyphs">-</text>
<text x="1665.14" y="576.2" font-size="12.2" fill="#000" textLength="5.73" lengthAdjust="spacingAndGlyphs">-</text>
<text x="1596.55" y="595.7" font-size="12.2" fill="#000" textLength="88.45" lengthAdjust="spacingAndGlyphs" stroke="#000" stroke-width="0.2" stroke-linejoin="round">142.600.000,00</text>
<text x="1783.14" y="375.2" font-size="12.2" fill="#000" textLength="5.73" lengthAdjust="spacingAndGlyphs">-</text>
<text x="1783.14" y="396.2" font-size="12.2" fill="#000" textLength="5.73" lengthAdjust="spacingAndGlyphs">-</text>
<text x="1783.14" y="416.2" font-size="12.2" fill="#000" textLength="5.73" lengthAdjust="spacingAndGlyphs">-</text>
<text x="1783.14" y="436.2" font-size="12.2" fill="#000" textLength="5.73" lengthAdjust="spacingAndGlyphs">-</text>
<text x="1783.14" y="456.2" font-size="12.2" fill="#000" textLength="5.73" lengthAdjust="spacingAndGlyphs">-</text>
<text x="1783.14" y="476.2" font-size="12.2" fill="#000" textLength="5.73" lengthAdjust="spacingAndGlyphs">-</text>
<text x="1783.14" y="496.2" font-size="12.2" fill="#000" textLength="5.73" lengthAdjust="spacingAndGlyphs">-</text>
<text x="1783.14" y="516.2" font-size="12.2" fill="#000" textLength="5.73" lengthAdjust="spacingAndGlyphs">-</text>
<text x="1783.14" y="536.2" font-size="12.2" fill="#000" textLength="5.73" lengthAdjust="spacingAndGlyphs">-</text>
<text x="1783.14" y="556.2" font-size="12.2" fill="#000" textLength="5.73" lengthAdjust="spacingAndGlyphs">-</text>
<text x="1783.14" y="576.2" font-size="12.2" fill="#000" textLength="5.73" lengthAdjust="spacingAndGlyphs">-</text>
<text x="1714.55" y="595.7" font-size="12.2" fill="#000" textLength="88.45" lengthAdjust="spacingAndGlyphs" stroke="#000" stroke-width="0.2" stroke-linejoin="round">170.026.096,00</text>
<text x="1890.14" y="375.2" font-size="12.2" fill="#000" textLength="5.73" lengthAdjust="spacingAndGlyphs">-</text>
<text x="1890.14" y="396.2" font-size="12.2" fill="#000" textLength="5.73" lengthAdjust="spacingAndGlyphs">-</text>
<text x="1890.14" y="416.2" font-size="12.2" fill="#000" textLength="5.73" lengthAdjust="spacingAndGlyphs">-</text>
<text x="1890.14" y="436.2" font-size="12.2" fill="#000" textLength="5.73" lengthAdjust="spacingAndGlyphs">-</text>
<text x="1890.14" y="456.2" font-size="12.2" fill="#000" textLength="5.73" lengthAdjust="spacingAndGlyphs">-</text>
<text x="1890.14" y="476.2" font-size="12.2" fill="#000" textLength="5.73" lengthAdjust="spacingAndGlyphs">-</text>
<text x="1890.14" y="496.2" font-size="12.2" fill="#000" textLength="5.73" lengthAdjust="spacingAndGlyphs">-</text>
<text x="1890.14" y="516.2" font-size="12.2" fill="#000" textLength="5.73" lengthAdjust="spacingAndGlyphs">-</text>
<text x="1890.14" y="536.2" font-size="12.2" fill="#000" textLength="5.73" lengthAdjust="spacingAndGlyphs">-</text>
<text x="1890.14" y="556.2" font-size="12.2" fill="#000" textLength="5.73" lengthAdjust="spacingAndGlyphs">-</text>
<text x="1890.14" y="576.2" font-size="12.2" fill="#000" textLength="5.73" lengthAdjust="spacingAndGlyphs">-</text>
<text x="1812.44" y="596.2" font-size="12.2" fill="#000" textLength="5.73" lengthAdjust="spacingAndGlyphs">-</text>
<text x="1828.16" y="595.7" font-size="12.2" fill="#000" textLength="81.37" lengthAdjust="spacingAndGlyphs">27.426.096,00</text>
<rect x="1573" y="600" width="238" height="2" fill="#000000" shape-rendering="crispEdges"/>
<rect x="1573" y="621" width="238" height="2" fill="#000000" shape-rendering="crispEdges"/>
<rect x="1573" y="601" width="2" height="21" fill="#000000" shape-rendering="crispEdges"/>
<rect x="1691" y="601" width="2" height="21" fill="#000000" shape-rendering="crispEdges"/>
<text x="1594.94" y="616.7" font-size="12.4" fill="#e4141f" textLength="89.90" lengthAdjust="spacingAndGlyphs" stroke="#e4141f" stroke-width="0.72" stroke-linejoin="round">142.600.000,00</text>
<text x="1712.94" y="616.7" font-size="12.4" fill="#e4141f" textLength="89.90" lengthAdjust="spacingAndGlyphs" stroke="#e4141f" stroke-width="0.72" stroke-linejoin="round">170.026.096,00</text>
<text x="158.04" y="313.7" font-size="13.2" fill="#000" textLength="75.44" lengthAdjust="spacingAndGlyphs" stroke="#000" stroke-width="0.72" stroke-linejoin="round">Saldo Awal :</text>
<text x="344.96" y="314" font-size="12.2" fill="#000" textLength="6.27" lengthAdjust="spacingAndGlyphs">-</text>
<text x="774.04" y="313.7" font-size="13.2" fill="#000" textLength="75.44" lengthAdjust="spacingAndGlyphs" stroke="#000" stroke-width="0.72" stroke-linejoin="round">Saldo Awal :</text>
<text x="960.96" y="314" font-size="12.2" fill="#000" textLength="6.27" lengthAdjust="spacingAndGlyphs">-</text>
<text x="1374.04" y="313.7" font-size="13.2" fill="#000" textLength="75.44" lengthAdjust="spacingAndGlyphs" stroke="#000" stroke-width="0.72" stroke-linejoin="round">Saldo Awal :</text>
<text x="1560.96" y="314" font-size="12.2" fill="#000" textLength="6.27" lengthAdjust="spacingAndGlyphs">-</text>
<text x="981.94" y="313.7" font-size="12.8" fill="#000" textLength="35.21" lengthAdjust="spacingAndGlyphs">BANK</text>
<rect x="26" y="318" width="151" height="2" fill="#000000" shape-rendering="crispEdges"/>
<rect x="26" y="379" width="151" height="2" fill="#000000" shape-rendering="crispEdges"/>
<rect x="175" y="318" width="2" height="63" fill="#000000" shape-rendering="crispEdges"/>
<rect x="89" y="320" width="1" height="59" fill="#000000" shape-rendering="crispEdges"/>
<rect x="26" y="339" width="149" height="1" fill="#000000" shape-rendering="crispEdges"/>
<rect x="26" y="359" width="149" height="1" fill="#000000" shape-rendering="crispEdges"/>
<rect x="27" y="320" width="62" height="19" fill="#fff" shape-rendering="crispEdges"/>
<rect x="90" y="320" width="85" height="19" fill="#fff" shape-rendering="crispEdges"/>
<text x="32.80" y="334.7" font-size="13.2" fill="#000" textLength="29.58" lengthAdjust="spacingAndGlyphs" stroke="#000" stroke-width="0.72" stroke-linejoin="round">Bank</text>
<text x="33.25" y="354.7" font-size="13.2" fill="#000" textLength="26.17" lengthAdjust="spacingAndGlyphs" stroke="#000" stroke-width="0.72" stroke-linejoin="round">COA</text>
<text x="32.79" y="374.7" font-size="13.2" fill="#000" textLength="43.63" lengthAdjust="spacingAndGlyphs" stroke="#000" stroke-width="0.72" stroke-linejoin="round">No Rek</text>
<text x="96.41" y="334.7" font-size="12.2" fill="#000" textLength="24.87" lengthAdjust="spacingAndGlyphs">BCA</text>
<text x="110.00" y="354.7" font-size="13.2" fill="#2e75b6" textLength="45.60" lengthAdjust="spacingAndGlyphs" stroke="#2e75b6" stroke-width="0.72" stroke-linejoin="round">1000.03</text>
<text x="783.34" y="374.7" font-size="12.2" fill="#000" textLength="7.08" lengthAdjust="spacingAndGlyphs">1</text>
<text x="783.36" y="395.7" font-size="12.2" fill="#000" textLength="7.08" lengthAdjust="spacingAndGlyphs">2</text>
<text x="783.28" y="415.7" font-size="12.2" fill="#000" textLength="7.08" lengthAdjust="spacingAndGlyphs">3</text>
<text x="783.10" y="435.7" font-size="12.2" fill="#000" textLength="7.08" lengthAdjust="spacingAndGlyphs">4</text>
<text x="783.26" y="455.7" font-size="12.2" fill="#000" textLength="7.08" lengthAdjust="spacingAndGlyphs">5</text>
<text x="783.28" y="475.7" font-size="12.2" fill="#000" textLength="7.08" lengthAdjust="spacingAndGlyphs">6</text>
<text x="783.36" y="495.7" font-size="12.2" fill="#000" textLength="7.08" lengthAdjust="spacingAndGlyphs">7</text>
<text x="783.28" y="515.7" font-size="12.2" fill="#000" textLength="7.08" lengthAdjust="spacingAndGlyphs">8</text>
<text x="783.33" y="535.7" font-size="12.2" fill="#000" textLength="7.08" lengthAdjust="spacingAndGlyphs">9</text>
<text x="776.14" y="555.7" font-size="12.2" fill="#000" textLength="14.15" lengthAdjust="spacingAndGlyphs">10</text>
<text x="776.27" y="575.7" font-size="12.2" fill="#000" textLength="14.15" lengthAdjust="spacingAndGlyphs">11</text>
<text x="776.29" y="595.7" font-size="12.2" fill="#000" textLength="14.15" lengthAdjust="spacingAndGlyphs">12</text>
<rect x="976" y="582" width="233" height="19" fill="#ffffff" shape-rendering="crispEdges"/>
<rect x="973" y="580" width="120" height="2" fill="#1e7145" shape-rendering="crispEdges"/>
<rect x="973" y="580" width="2" height="23" fill="#1e7145" shape-rendering="crispEdges"/>
<rect x="973" y="601" width="120" height="2" fill="#1e7145" shape-rendering="crispEdges"/>
<rect x="1090" y="600" width="5" height="4" fill="#1e7145" shape-rendering="crispEdges"/>
<rect x="1093" y="580" width="118" height="1" fill="#000000" shape-rendering="crispEdges"/>
<rect x="1095" y="601" width="116" height="1" fill="#000000" shape-rendering="crispEdges"/>
<text x="976.67" y="595.7" font-size="12.2" fill="#000" textLength="208.09" lengthAdjust="spacingAndGlyphs">=SUMIFS(GL!I:I;GL!D:D;'Rekap RK'!</text>
<rect x="1185" y="583" width="1" height="17" fill="#000" shape-rendering="crispEdges"/>
<rect x="973" y="603" width="2" height="20" fill="#000000" shape-rendering="crispEdges"/>
<rect x="973" y="621" width="238" height="2" fill="#000000" shape-rendering="crispEdges"/>
<rect x="986" y="609" width="405" height="17" rx="3" fill="#000" opacity="0.34" filter="url(#tsh)"/>
<rect x="984.5" y="604.5" width="407.5" height="16.5" rx="3" fill="#f1f1f1" stroke="#bdbdbd" stroke-width="1"/>
<text x="989.88" y="615.6" font-size="12" fill="#505050" textLength="188.64" lengthAdjust="spacingAndGlyphs">SUMIFS(sum_range; criteria_range1;</text>
<text x="1181.62" y="615.6" font-size="12" fill="#1a1a1a" textLength="44.83" lengthAdjust="spacingAndGlyphs" stroke="#1a1a1a" stroke-width="0.72" stroke-linejoin="round">criteria1</text>
<text x="1226.75" y="615.6" font-size="12" fill="#505050" textLength="159.58" lengthAdjust="spacingAndGlyphs">; [criteria_range2; criteria2]; ...)</text>
</g>
</g>
<g id="headers">
<rect x="0" y="219" width="1898" height="19" fill="#0c0b0b" shape-rendering="crispEdges"/>
<rect x="0" y="238" width="26" height="740" fill="#0c0b0b" shape-rendering="crispEdges"/>
<rect x="0" y="238" width="26" height="1" fill="#6a6a6a" shape-rendering="crispEdges"/>
<rect x="25" y="219" width="1" height="759" fill="#6a6a6a" shape-rendering="crispEdges"/>
<path d="M22 224 L22 235 L10 235 Z" fill="#9a9a9a"/>
<rect x="974" y="219" width="119" height="19" fill="#656363" shape-rendering="crispEdges"/>
<rect x="974" y="219" width="1" height="19" fill="#d0d0d0" shape-rendering="crispEdges"/>
<rect x="1092" y="219" width="1" height="19" fill="#d0d0d0" shape-rendering="crispEdges"/>
<rect x="974" y="237" width="119" height="2" fill="#1f7a4d" shape-rendering="crispEdges"/>
<rect x="89" y="219" width="1" height="19" fill="#5c5c5c" shape-rendering="crispEdges"/>
<text x="54.13" y="233.8" font-size="12.5" fill="#ebebeb">A</text>
<rect x="176" y="219" width="1" height="19" fill="#5c5c5c" shape-rendering="crispEdges"/>
<text x="129.63" y="233.8" font-size="12.5" fill="#ebebeb">B</text>
<rect x="240" y="219" width="1" height="19" fill="#5c5c5c" shape-rendering="crispEdges"/>
<text x="204.79" y="233.8" font-size="12.5" fill="#ebebeb">C</text>
<rect x="358" y="219" width="1" height="19" fill="#5c5c5c" shape-rendering="crispEdges"/>
<text x="295.79" y="233.8" font-size="12.5" fill="#ebebeb">D</text>
<rect x="484" y="219" width="1" height="19" fill="#5c5c5c" shape-rendering="crispEdges"/>
<text x="418.13" y="233.8" font-size="12.5" fill="#ebebeb">E</text>
<rect x="610" y="219" width="1" height="19" fill="#5c5c5c" shape-rendering="crispEdges"/>
<text x="544.48" y="233.8" font-size="12.5" fill="#ebebeb">F</text>
<rect x="728" y="219" width="1" height="19" fill="#5c5c5c" shape-rendering="crispEdges"/>
<text x="665.44" y="233.8" font-size="12.5" fill="#ebebeb">G</text>
<rect x="792" y="219" width="1" height="19" fill="#5c5c5c" shape-rendering="crispEdges"/>
<text x="756.79" y="233.8" font-size="12.5" fill="#ebebeb">H</text>
<rect x="856" y="219" width="1" height="19" fill="#5c5c5c" shape-rendering="crispEdges"/>
<text x="823.56" y="233.8" font-size="12.5" fill="#ebebeb">I</text>
<text x="913.17" y="233.8" font-size="12.5" fill="#ebebeb">J</text>
<text x="1030.13" y="233.8" font-size="12.5" fill="#ebebeb">K</text>
<rect x="1210" y="219" width="1" height="19" fill="#5c5c5c" shape-rendering="crispEdges"/>
<text x="1148.82" y="233.8" font-size="12.5" fill="#ebebeb">L</text>
<rect x="1328" y="219" width="1" height="19" fill="#5c5c5c" shape-rendering="crispEdges"/>
<text x="1265.09" y="233.8" font-size="12.5" fill="#ebebeb">M</text>
<rect x="1392" y="219" width="1" height="19" fill="#5c5c5c" shape-rendering="crispEdges"/>
<text x="1356.79" y="233.8" font-size="12.5" fill="#ebebeb">N</text>
<rect x="1456" y="219" width="1" height="19" fill="#5c5c5c" shape-rendering="crispEdges"/>
<text x="1420.44" y="233.8" font-size="12.5" fill="#ebebeb">O</text>
<rect x="1574" y="219" width="1" height="19" fill="#5c5c5c" shape-rendering="crispEdges"/>
<text x="1512.13" y="233.8" font-size="12.5" fill="#ebebeb">P</text>
<rect x="1692" y="219" width="1" height="19" fill="#5c5c5c" shape-rendering="crispEdges"/>
<text x="1629.44" y="233.8" font-size="12.5" fill="#ebebeb">Q</text>
<rect x="1810" y="219" width="1" height="19" fill="#5c5c5c" shape-rendering="crispEdges"/>
<text x="1747.79" y="233.8" font-size="12.5" fill="#ebebeb">R</text>
<text x="1860.43" y="233.8" font-size="12.5" fill="#ebebeb">S</text>
<rect x="0" y="581" width="25" height="21" fill="#656363" shape-rendering="crispEdges"/>
<rect x="24" y="581" width="2" height="21" fill="#1f7a4d" shape-rendering="crispEdges"/>
<g clip-path="url(#c5)">
<rect x="0" y="258" width="25" height="1" fill="#3c3c3c" shape-rendering="crispEdges"/>
<text x="9.42" y="253.9" font-size="12.5" fill="#ebebeb" textLength="7.16" lengthAdjust="spacingAndGlyphs">1</text>
<rect x="0" y="278" width="25" height="1" fill="#3c3c3c" shape-rendering="crispEdges"/>
<text x="9.42" y="273.9" font-size="12.5" fill="#ebebeb" textLength="7.16" lengthAdjust="spacingAndGlyphs">2</text>
<rect x="0" y="298" width="25" height="1" fill="#3c3c3c" shape-rendering="crispEdges"/>
<text x="9.42" y="293.9" font-size="12.5" fill="#ebebeb" textLength="7.16" lengthAdjust="spacingAndGlyphs">3</text>
<rect x="0" y="319" width="25" height="1" fill="#3c3c3c" shape-rendering="crispEdges"/>
<text x="9.42" y="314.4" font-size="12.5" fill="#ebebeb" textLength="7.16" lengthAdjust="spacingAndGlyphs">4</text>
<rect x="0" y="339" width="25" height="1" fill="#3c3c3c" shape-rendering="crispEdges"/>
<text x="9.42" y="334.9" font-size="12.5" fill="#ebebeb" textLength="7.16" lengthAdjust="spacingAndGlyphs">5</text>
<rect x="0" y="359" width="25" height="1" fill="#3c3c3c" shape-rendering="crispEdges"/>
<text x="9.42" y="354.9" font-size="12.5" fill="#ebebeb" textLength="7.16" lengthAdjust="spacingAndGlyphs">6</text>
<rect x="0" y="380" width="25" height="1" fill="#3c3c3c" shape-rendering="crispEdges"/>
<text x="9.42" y="375.4" font-size="12.5" fill="#ebebeb" textLength="7.16" lengthAdjust="spacingAndGlyphs">7</text>
<rect x="0" y="400" width="25" height="1" fill="#3c3c3c" shape-rendering="crispEdges"/>
<text x="9.42" y="395.9" font-size="12.5" fill="#ebebeb" textLength="7.16" lengthAdjust="spacingAndGlyphs">8</text>
<rect x="0" y="420" width="25" height="1" fill="#3c3c3c" shape-rendering="crispEdges"/>
<text x="9.42" y="415.9" font-size="12.5" fill="#ebebeb" textLength="7.16" lengthAdjust="spacingAndGlyphs">9</text>
<rect x="0" y="440" width="25" height="1" fill="#3c3c3c" shape-rendering="crispEdges"/>
<text x="5.84" y="435.9" font-size="12.5" fill="#ebebeb" textLength="14.32" lengthAdjust="spacingAndGlyphs">10</text>
<rect x="0" y="460" width="25" height="1" fill="#3c3c3c" shape-rendering="crispEdges"/>
<text x="5.84" y="455.9" font-size="12.5" fill="#ebebeb" textLength="14.32" lengthAdjust="spacingAndGlyphs">11</text>
<rect x="0" y="480" width="25" height="1" fill="#3c3c3c" shape-rendering="crispEdges"/>
<text x="5.84" y="475.9" font-size="12.5" fill="#ebebeb" textLength="14.32" lengthAdjust="spacingAndGlyphs">12</text>
<rect x="0" y="500" width="25" height="1" fill="#3c3c3c" shape-rendering="crispEdges"/>
<text x="5.84" y="495.9" font-size="12.5" fill="#ebebeb" textLength="14.32" lengthAdjust="spacingAndGlyphs">13</text>
<rect x="0" y="520" width="25" height="1" fill="#3c3c3c" shape-rendering="crispEdges"/>
<text x="5.84" y="515.9" font-size="12.5" fill="#ebebeb" textLength="14.32" lengthAdjust="spacingAndGlyphs">14</text>
<rect x="0" y="540" width="25" height="1" fill="#3c3c3c" shape-rendering="crispEdges"/>
<text x="5.84" y="535.9" font-size="12.5" fill="#ebebeb" textLength="14.32" lengthAdjust="spacingAndGlyphs">15</text>
<rect x="0" y="560" width="25" height="1" fill="#3c3c3c" shape-rendering="crispEdges"/>
<text x="5.84" y="555.9" font-size="12.5" fill="#ebebeb" textLength="14.32" lengthAdjust="spacingAndGlyphs">16</text>
<rect x="0" y="580" width="24" height="1" fill="#bdbdbd" shape-rendering="crispEdges"/>
<text x="5.84" y="575.9" font-size="12.5" fill="#ebebeb" textLength="14.32" lengthAdjust="spacingAndGlyphs">17</text>
<rect x="0" y="601" width="24" height="1" fill="#bdbdbd" shape-rendering="crispEdges"/>
<text x="5.84" y="596.4" font-size="12.5" fill="#ebebeb" textLength="14.32" lengthAdjust="spacingAndGlyphs">18</text>
<rect x="0" y="622" width="25" height="1" fill="#3c3c3c" shape-rendering="crispEdges"/>
<text x="5.84" y="617.4" font-size="12.5" fill="#ebebeb" textLength="14.32" lengthAdjust="spacingAndGlyphs">19</text>
<rect x="0" y="642" width="25" height="1" fill="#3c3c3c" shape-rendering="crispEdges"/>
<text x="5.84" y="637.9" font-size="12.5" fill="#ebebeb" textLength="14.32" lengthAdjust="spacingAndGlyphs">20</text>
<rect x="0" y="662" width="25" height="1" fill="#3c3c3c" shape-rendering="crispEdges"/>
<text x="5.84" y="657.9" font-size="12.5" fill="#ebebeb" textLength="14.32" lengthAdjust="spacingAndGlyphs">21</text>
<rect x="0" y="682" width="25" height="1" fill="#3c3c3c" shape-rendering="crispEdges"/>
<text x="5.84" y="677.9" font-size="12.5" fill="#ebebeb" textLength="14.32" lengthAdjust="spacingAndGlyphs">22</text>
<rect x="0" y="702" width="25" height="1" fill="#3c3c3c" shape-rendering="crispEdges"/>
<text x="5.84" y="697.9" font-size="12.5" fill="#ebebeb" textLength="14.32" lengthAdjust="spacingAndGlyphs">23</text>
<rect x="0" y="722" width="25" height="1" fill="#3c3c3c" shape-rendering="crispEdges"/>
<text x="5.84" y="717.9" font-size="12.5" fill="#ebebeb" textLength="14.32" lengthAdjust="spacingAndGlyphs">24</text>
<rect x="0" y="742" width="25" height="1" fill="#3c3c3c" shape-rendering="crispEdges"/>
<text x="5.84" y="737.9" font-size="12.5" fill="#ebebeb" textLength="14.32" lengthAdjust="spacingAndGlyphs">25</text>
<rect x="0" y="762" width="25" height="1" fill="#3c3c3c" shape-rendering="crispEdges"/>
<text x="5.84" y="757.9" font-size="12.5" fill="#ebebeb" textLength="14.32" lengthAdjust="spacingAndGlyphs">26</text>
<rect x="0" y="782" width="25" height="1" fill="#3c3c3c" shape-rendering="crispEdges"/>
<text x="5.84" y="777.9" font-size="12.5" fill="#ebebeb" textLength="14.32" lengthAdjust="spacingAndGlyphs">27</text>
<rect x="0" y="802" width="25" height="1" fill="#3c3c3c" shape-rendering="crispEdges"/>
<text x="5.84" y="797.9" font-size="12.5" fill="#ebebeb" textLength="14.32" lengthAdjust="spacingAndGlyphs">28</text>
<rect x="0" y="822" width="25" height="1" fill="#3c3c3c" shape-rendering="crispEdges"/>
<text x="5.84" y="817.9" font-size="12.5" fill="#ebebeb" textLength="14.32" lengthAdjust="spacingAndGlyphs">29</text>
<rect x="0" y="842" width="25" height="1" fill="#3c3c3c" shape-rendering="crispEdges"/>
<text x="5.84" y="837.9" font-size="12.5" fill="#ebebeb" textLength="14.32" lengthAdjust="spacingAndGlyphs">30</text>
<rect x="0" y="862" width="25" height="1" fill="#3c3c3c" shape-rendering="crispEdges"/>
<text x="5.84" y="857.9" font-size="12.5" fill="#ebebeb" textLength="14.32" lengthAdjust="spacingAndGlyphs">31</text>
<rect x="0" y="882" width="25" height="1" fill="#3c3c3c" shape-rendering="crispEdges"/>
<text x="5.84" y="877.9" font-size="12.5" fill="#ebebeb" textLength="14.32" lengthAdjust="spacingAndGlyphs">32</text>
<rect x="0" y="902" width="25" height="1" fill="#3c3c3c" shape-rendering="crispEdges"/>
<text x="5.84" y="897.9" font-size="12.5" fill="#ebebeb" textLength="14.32" lengthAdjust="spacingAndGlyphs">33</text>
<rect x="0" y="922" width="25" height="1" fill="#3c3c3c" shape-rendering="crispEdges"/>
<text x="5.84" y="917.9" font-size="12.5" fill="#ebebeb" textLength="14.32" lengthAdjust="spacingAndGlyphs">34</text>
<rect x="0" y="942" width="25" height="1" fill="#3c3c3c" shape-rendering="crispEdges"/>
<text x="5.84" y="937.9" font-size="12.5" fill="#ebebeb" textLength="14.32" lengthAdjust="spacingAndGlyphs">35</text>
<rect x="0" y="962" width="25" height="1" fill="#3c3c3c" shape-rendering="crispEdges"/>
<text x="5.84" y="957.9" font-size="12.5" fill="#ebebeb" textLength="14.32" lengthAdjust="spacingAndGlyphs">36</text>
<rect x="0" y="982" width="25" height="1" fill="#3c3c3c" shape-rendering="crispEdges"/>
<text x="5.84" y="977.9" font-size="12.5" fill="#ebebeb" textLength="14.32" lengthAdjust="spacingAndGlyphs">37</text>
</g>
<rect x="1898" y="219" width="22" height="759" fill="#151314" shape-rendering="crispEdges"/>
<path d="M1905 231 L1909.5 224.5 L1914 231 Z" fill="#a0a0a0"/>
<rect x="1905" y="236" width="9" height="707" fill="#9b9b9b" rx="4"/>
<path d="M1905 969.5 L1914 969.5 L1909.5 976 Z" fill="#a0a0a0"/>
</g>
<g id="titlebar">
<text x="182.76" y="28.7" font-size="12.5" fill="#ffffff" textLength="302.21" lengthAdjust="spacingAndGlyphs">Kertas Kerja Sentosa Abadi Advertaising 2025 ayu  -  Excel</text>
<rect x="784.5" y="8.5" width="367" height="31" rx="4" fill="#1f181b" stroke="#5e5a5c" stroke-width="1"/>
<text x="825.23" y="29.5" font-size="14" fill="#cfcfcf" textLength="40.10" lengthAdjust="spacingAndGlyphs">Search</text>
<rect x="1708" y="14" width="58" height="19" fill="#ffffff" rx="2"/>
<text x="1718.76" y="29.4" font-size="12.5" fill="#111" textLength="36.41" lengthAdjust="spacingAndGlyphs">Sign in</text>
<rect x="1837" y="51.5" width="71" height="23.5" fill="#3ea961" rx="4"/>
<text x="1858.24" y="68" font-size="13" fill="#0c0c0c" textLength="33.01" lengthAdjust="spacingAndGlyphs">Share</text>
<text x="22.13" y="68.1" font-size="13.3" fill="#ffffff" textLength="19.10" lengthAdjust="spacingAndGlyphs">File</text>
<text x="66.52" y="68.1" font-size="13.3" fill="#ffffff" textLength="38.21" lengthAdjust="spacingAndGlyphs" stroke="#ffffff" stroke-width="0.55" stroke-linejoin="round">Home</text>
<text x="123.17" y="68.1" font-size="13.3" fill="#ffffff">Insert</text>
<text x="176.31" y="68.1" font-size="13.3" fill="#ffffff">Draw</text>
<text x="228.35" y="68.1" font-size="13.3" fill="#ffffff" textLength="72.15" lengthAdjust="spacingAndGlyphs">Page Layout</text>
<text x="321.33" y="68.1" font-size="13.3" fill="#ffffff" textLength="54.55" lengthAdjust="spacingAndGlyphs">Formulas</text>
<text x="395.31" y="68.1" font-size="13.3" fill="#ffffff">Data</text>
<text x="443.68" y="68.1" font-size="13.3" fill="#ffffff" textLength="40.89" lengthAdjust="spacingAndGlyphs">Review</text>
<text x="504.14" y="68.1" font-size="13.3" fill="#ffffff" textLength="27.42" lengthAdjust="spacingAndGlyphs">View</text>
<text x="550.59" y="68.1" font-size="13.3" fill="#ffffff" textLength="27.88" lengthAdjust="spacingAndGlyphs">Help</text>
<text x="599.17" y="68.1" font-size="13.3" fill="#ffffff" textLength="46.83" lengthAdjust="spacingAndGlyphs">Acrobat</text>
<rect x="67.4" y="73.4" width="37" height="2" fill="#86c6a0" rx="1"/>
</g>
<g id="titleicons" fill="none" stroke-linecap="round" stroke-linejoin="round">
<rect x="20.5" y="16" width="11" height="16" fill="#21a366" rx="1.2"/>
<path d="M20.5 17.2 a1.2 1.2 0 0 1 1.2 -1.2 h8.6 a1.2 1.2 0 0 1 1.2 1.2 v3.8 h-11 z" fill="#8fe27c" stroke="none"/>
<rect x="26" y="21" width="5.5" height="5.5" fill="#33c481" stroke="none"/>
<rect x="26" y="26.5" width="5.5" height="5.5" fill="#185c37" stroke="none"/>
<rect x="20.5" y="26.5" width="5.5" height="5.5" fill="#107c41" stroke="none"/>
<rect x="16.3" y="21.3" width="9" height="9.2" fill="#107c41" rx="1"/>
<path d="M18.8 23.4 L22.8 28.4 M22.8 23.4 L18.8 28.4" fill="none" stroke="#fff" stroke-width="1.4"/>
<path d="M48.5 16.8 H63.4 V31.2 H51 L48.5 28.7 Z" fill="none" stroke="#fff" stroke-width="1.3"/>
<path d="M52 16.8 V21.5 H60 V16.8 M52.5 31.2 V25.5 H60 V31.2" fill="none" stroke="#fff" stroke-width="1.3"/>
<path d="M78.6 16.6 V22.6 H84.6" fill="none" stroke="#fff" stroke-width="1.4"/>
<path d="M79 22.3 C82 18 87 16.3 89.6 19 C92.3 22 91 24.5 88.5 27 L83.5 31.6" fill="none" stroke="#fff" stroke-width="1.4"/>
<path d="M98.5 22.2 L101.2 25 L103.9 22.2" fill="none" stroke="#fff" stroke-width="1.5"/>
<path d="M130.6 16.6 V22.6 H124.6" fill="none" stroke="#5a5a5c" stroke-width="1.4"/>
<path d="M130.2 22.3 C127.2 18 122.2 16.3 119.6 19 C116.9 22 118.2 24.5 120.7 27 L125.7 31.6" fill="none" stroke="#5a5a5c" stroke-width="1.4"/>
<path d="M137.5 22.2 L140.2 25 L142.9 22.2" fill="none" stroke="#5a5a5c" stroke-width="1.5"/>
<path d="M159.3 21.3 H166.3" fill="none" stroke="#fff" stroke-width="1.3"/>
<path d="M159.6 24 L162.8 27.2 L166 24" fill="none" stroke="#fff" stroke-width="1.3"/>
<circle cx="807.5" cy="20.5" r="4.3" fill="none" stroke="#cfcfcf" stroke-width="1.3"/>
<path d="M804.3 23.7 L799 29.6" fill="none" stroke="#cfcfcf" stroke-width="1.4"/>
<path d="M1795 23.5 H1805" fill="none" stroke="#fff" stroke-width="1.1"/>
<rect x="1843.5" y="21" width="7.5" height="7.5" rx="1.5" stroke="#fff" stroke-width="1.1"/>
<path d="M1845.8 19 H1851 a2 2 0 0 1 2 2 V26.3" fill="none" stroke="#fff" stroke-width="1.1"/>
<path d="M1891 18.8 L1901.6 29.4 M1901.6 18.8 L1891 29.4" fill="none" stroke="#fff" stroke-width="1.2"/>
<path d="M1844.6 62 H1842.6 a0.8 0.8 0 0 0 -0.8 0.8 V68.6 a0.8 0.8 0 0 0 0.8 0.8 H1850.2 a0.8 0.8 0 0 0 0.8 -0.8 V66.6" fill="none" stroke="#0c0c0c" stroke-width="1.2"/>
<path d="M1844.6 66.6 C1845 63.2 1847 61.4 1850.4 61.2 V58.8 L1853 61.8 L1850.4 64.6 V63 C1848 63 1846 64.4 1844.6 66.6 Z" fill="none" stroke="#0c0c0c" stroke-width="1"/>
<path d="M1897.9 61.8 L1900.6 64.6 L1903.3 61.8" fill="none" stroke="#0c0c0c" stroke-width="1.2"/>
</g>
<g id="ribbon">
<rect x="8" y="78" width="1904" height="100.5" fill="#292929" rx="8"/>
<rect x="182" y="84" width="1" height="88" fill="#4e4e4e" shape-rendering="crispEdges"/>
<rect x="418" y="84" width="1" height="88" fill="#4e4e4e" shape-rendering="crispEdges"/>
<rect x="720" y="84" width="1" height="88" fill="#4e4e4e" shape-rendering="crispEdges"/>
<rect x="882" y="84" width="1" height="88" fill="#4e4e4e" shape-rendering="crispEdges"/>
<rect x="1277" y="84" width="1" height="88" fill="#4e4e4e" shape-rendering="crispEdges"/>
<rect x="1424" y="84" width="1" height="88" fill="#4e4e4e" shape-rendering="crispEdges"/>
<rect x="1640" y="84" width="1" height="88" fill="#4e4e4e" shape-rendering="crispEdges"/>
<rect x="1703" y="84" width="1" height="88" fill="#4e4e4e" shape-rendering="crispEdges"/>
<rect x="1813" y="84" width="1" height="88" fill="#4e4e4e" shape-rendering="crispEdges"/>
<rect x="284" y="122" width="1" height="24" fill="#4e4e4e" shape-rendering="crispEdges"/>
<rect x="328" y="122" width="1" height="24" fill="#4e4e4e" shape-rendering="crispEdges"/>
<rect x="505" y="90" width="1" height="24.5" fill="#4e4e4e" shape-rendering="crispEdges"/>
<rect x="505" y="122" width="1" height="24.5" fill="#4e4e4e" shape-rendering="crispEdges"/>
<rect x="564" y="88" width="1" height="63" fill="#4e4e4e" shape-rendering="crispEdges"/>
<rect x="822" y="122" width="1" height="24" fill="#4e4e4e" shape-rendering="crispEdges"/>
<rect x="191.5" y="90.5" width="121.5" height="22.5" rx="4" fill="#141414" stroke="#3d3d3d" stroke-width="1"/>
<rect x="317" y="90.5" width="41" height="22.5" rx="4" fill="#141414" stroke="#3d3d3d" stroke-width="1"/>
<rect x="729" y="90.5" width="145" height="22.5" rx="4" fill="#141414" stroke="#3d3d3d" stroke-width="1"/>
<rect x="1028.5" y="90.5" width="238" height="61.5" rx="4" fill="none" stroke="#505050" stroke-width="1"/>
<rect x="1243" y="91" width="1" height="61" fill="#505050" shape-rendering="crispEdges"/>
<rect x="1033" y="96" width="100" height="21.5" fill="#595959" shape-rendering="crispEdges"/>
<rect x="1139" y="96" width="100" height="21.5" fill="#595959" shape-rendering="crispEdges"/>
<rect x="1033" y="124" width="100" height="21.5" fill="#a6a6a6" shape-rendering="crispEdges"/>
<rect x="1139" y="124" width="100" height="21.5" fill="#a6a6a6" shape-rendering="crispEdges"/>
<text x="27.00" y="132.7" font-size="12" fill="#686868" textLength="28.19" lengthAdjust="spacingAndGlyphs">Paste</text>
<text x="87.86" y="99" font-size="12" fill="#ffffff" textLength="19.48" lengthAdjust="spacingAndGlyphs">Cut</text>
<text x="87.88" y="125.1" font-size="12" fill="#ffffff" textLength="28.39" lengthAdjust="spacingAndGlyphs">Copy</text>
<text x="87.52" y="151" font-size="12" fill="#686868" textLength="78.67" lengthAdjust="spacingAndGlyphs">Format Painter</text>
<text x="63.68" y="172" font-size="12" fill="#f2f2f2" textLength="51.85" lengthAdjust="spacingAndGlyphs">Clipboard</text>
<text x="319.14" y="106.3" font-size="12" fill="#686868" textLength="11.15" lengthAdjust="spacingAndGlyphs">11</text>
<text x="280.27" y="172" font-size="12" fill="#f2f2f2" textLength="25.02" lengthAdjust="spacingAndGlyphs">Font</text>
<text x="595.35" y="107" font-size="12" fill="#686868" textLength="51.73" lengthAdjust="spacingAndGlyphs">Wrap Text</text>
<text x="594.41" y="138.8" font-size="12" fill="#686868" textLength="85.55" lengthAdjust="spacingAndGlyphs">Merge &amp; Center</text>
<text x="534.98" y="172" font-size="12" fill="#f2f2f2">Alignment</text>
<text x="732.48" y="106.3" font-size="12" fill="#686868" textLength="61.73" lengthAdjust="spacingAndGlyphs">Accounting</text>
<text x="772.44" y="172" font-size="12" fill="#f2f2f2" textLength="41.76" lengthAdjust="spacingAndGlyphs">Number</text>
<text x="896.36" y="132.3" font-size="12" fill="#686868" textLength="63.29" lengthAdjust="spacingAndGlyphs">Conditional</text>
<text x="892.16" y="148.2" font-size="12" fill="#686868" textLength="60.66" lengthAdjust="spacingAndGlyphs">Formatting</text>
<text x="969.28" y="132.3" font-size="12" fill="#686868" textLength="53.35" lengthAdjust="spacingAndGlyphs">Format as</text>
<text x="977.76" y="148.2" font-size="12" fill="#686868" textLength="26.71" lengthAdjust="spacingAndGlyphs">Table</text>
<text x="1065.77" y="172" font-size="12" fill="#f2f2f2" textLength="29.02" lengthAdjust="spacingAndGlyphs">Styles</text>
<text x="1290.90" y="132.4" font-size="12" fill="#686868" textLength="29.79" lengthAdjust="spacingAndGlyphs">Insert</text>
<text x="1333.74" y="132.4" font-size="12" fill="#686868" textLength="33.78" lengthAdjust="spacingAndGlyphs">Delete</text>
<text x="1375.49" y="132.4" font-size="12" fill="#686868" textLength="39.00" lengthAdjust="spacingAndGlyphs">Format</text>
<text x="1338.85" y="172" font-size="12" fill="#f2f2f2" textLength="23.94" lengthAdjust="spacingAndGlyphs">Cells</text>
<text x="1456.98" y="98.9" font-size="12" fill="#ffffff" textLength="50.43" lengthAdjust="spacingAndGlyphs">AutoSum</text>
<text x="1456.47" y="125" font-size="12" fill="#686868" textLength="15.96" lengthAdjust="spacingAndGlyphs">Fill</text>
<text x="1456.93" y="151" font-size="12" fill="#ffffff" textLength="27.01" lengthAdjust="spacingAndGlyphs">Clear</text>
<text x="1545.44" y="132.3" font-size="12" fill="#686868" textLength="34.51" lengthAdjust="spacingAndGlyphs">Sort &amp;</text>
<text x="1543.72" y="148.2" font-size="12" fill="#686868" textLength="26.48" lengthAdjust="spacingAndGlyphs">Filter</text>
<text x="1590.17" y="132.3" font-size="12" fill="#ffffff" textLength="36.28" lengthAdjust="spacingAndGlyphs">Find &amp;</text>
<text x="1587.69" y="148.2" font-size="12" fill="#ffffff" textLength="31.40" lengthAdjust="spacingAndGlyphs">Select</text>
<text x="1513.27" y="172" font-size="12" fill="#f2f2f2" textLength="38.23" lengthAdjust="spacingAndGlyphs">Editing</text>
<text x="1651.28" y="132.3" font-size="12" fill="#686868" textLength="42.17" lengthAdjust="spacingAndGlyphs">Add-ins</text>
<text x="1652.23" y="172" font-size="12" fill="#f2f2f2" textLength="39.44" lengthAdjust="spacingAndGlyphs">Add-ins</text>
<text x="1714.12" y="132.3" font-size="12" fill="#ffffff" textLength="89.58" lengthAdjust="spacingAndGlyphs">Create and Share</text>
<text x="1728.98" y="148.2" font-size="12" fill="#ffffff" textLength="59.89" lengthAdjust="spacingAndGlyphs">Adobe PDF</text>
<text x="1720.28" y="172" font-size="12" fill="#f2f2f2" textLength="77.01" lengthAdjust="spacingAndGlyphs">Adobe Acrobat</text>
<text x="1037.57" y="110.7" font-size="12.5" fill="#9c9c9c" textLength="49.00" lengthAdjust="spacingAndGlyphs">Accent5</text>
<text x="1143.57" y="110.7" font-size="12.5" fill="#9c9c9c" textLength="49.02" lengthAdjust="spacingAndGlyphs">Accent6</text>
<text x="1036.92" y="138.8" font-size="12.5" fill="#1c1c1c" textLength="46.58" lengthAdjust="spacingAndGlyphs">Comma</text>
<text x="1142.91" y="138.8" font-size="12.5" fill="#1c1c1c" textLength="66.46" lengthAdjust="spacingAndGlyphs">Comma [0]</text>
</g>
<g id="ribbonicons" fill="none" stroke-linecap="butt" stroke-linejoin="miter">
<path d="M36 93 H31 V113.6 H43" fill="none" stroke="#a9a9a9" stroke-width="2"/>
<path d="M45.5 93 H49.8 V99" fill="none" stroke="#a9a9a9" stroke-width="2"/>
<path d="M35.6 94.2 V91 H38.4 a2.4 2.4 0 0 1 4.6 0 H45.8 V94.2 Z" fill="none" stroke="#a9a9a9" stroke-width="1.3"/>
<rect x="43.8" y="99.8" width="12.6" height="16.6" fill="#292929" stroke="#b4b4b4" stroke-width="1.2"/>
<path d="M37.3 143.1 L40.3 146.1 L43.3 143.1" fill="none" stroke="#5e5e5e" stroke-width="1.3"/>
<path d="M72.6 86.6 L78.6 97.5 M79.4 86.6 L73.4 97.5" fill="none" stroke="#f0f0f0" stroke-width="1.3"/>
<circle cx="73.2" cy="99.6" r="1.9" fill="none" stroke="#4f9fe0" stroke-width="1.3"/>
<circle cx="78.8" cy="99.6" r="1.9" fill="none" stroke="#4f9fe0" stroke-width="1.3"/>
<path d="M72.6 124.9 H68.8 V113 H74.6 L76.2 114.6" fill="none" stroke="#f0f0f0" stroke-width="1.3"/>
<path d="M74.8 116 H80 L83.6 119.6 V127.6 H74.8 Z" fill="none" stroke="#f0f0f0" stroke-width="1.3"/>
<path d="M79.8 116.2 V119.8 H83.4 M77 122 H81.4 M77 124.6 H81.4" fill="none" stroke="#f0f0f0" stroke-width="1.1"/>
<path d="M133.1 119.3 L136.4 122.7 L139.7 119.3" fill="none" stroke="#fff" stroke-width="1.6"/>
<path d="M80.4 138.8 L83.8 141.4 L79.4 146.2 L76.6 143.8 Z" fill="none" stroke="#bcbcbc" stroke-width="1.2"/>
<path d="M77.6 143.2 L72.4 143 L69.2 146.4 L77 152.4 L80.4 148.2 L79.6 145.6" fill="none" stroke="#bcbcbc" stroke-width="1.2"/>
<path d="M71.4 147.8 L76 151.4" fill="none" stroke="#bcbcbc" stroke-width="1.1"/>
<path d="M305.1 101.2 L307.9 104 L310.7 101.2" fill="none" stroke="#5e5e5e" stroke-width="1.3"/>
<path d="M350.1 101.2 L352.9 104 L355.7 101.2" fill="none" stroke="#5e5e5e" stroke-width="1.3"/>
<text x="365.97" y="107" font-size="17" fill="#bcbcbc" textLength="11.47" lengthAdjust="spacingAndGlyphs">A</text>
<path d="M376.6 97.6 L378.8 95.2 L381 97.6" fill="none" stroke="#bcbcbc" stroke-width="1.1"/>
<text x="393.47" y="107" font-size="13.6" fill="#bcbcbc" textLength="9.46" lengthAdjust="spacingAndGlyphs">A</text>
<path d="M402.6 95 L404.8 97.4 L407 95" fill="none" stroke="#bcbcbc" stroke-width="1.1"/>
<text x="198.79" y="137.6" font-size="13.5" fill="#cdcdcd" font-weight="bold" textLength="8.76" lengthAdjust="spacingAndGlyphs">B</text>
<text x="226.05" y="137.6" font-size="14" fill="#cdcdcd" font-style="italic" style='font-family:"Liberation Serif", serif'>I</text>
<text x="249.20" y="137.2" font-size="13" fill="#cdcdcd" textLength="11.19" lengthAdjust="spacingAndGlyphs">U</text>
<path d="M250 139.4 H259.8" fill="none" stroke="#cdcdcd" stroke-width="1.1"/>
<path d="M270.7 132.4 L273.5 135.2 L276.3 132.4" fill="none" stroke="#5e5e5e" stroke-width="1.3"/>
<path d="M291.5 126.4 H306 M291.5 133.2 H306 M291.5 126.4 V140 M298.7 126.4 V140 M305.6 126.4 V140" fill="none" stroke="#bdbdbd" stroke-width="1" stroke-dasharray="1 1.4"/>
<path d="M291 140.6 H306.4" fill="none" stroke="#e0e0e0" stroke-width="1.3"/>
<path d="M314.5 132.4 L317.3 135.2 L320.1 132.4" fill="none" stroke="#5e5e5e" stroke-width="1.3"/>
<path d="M340.6 126.2 L346.6 131.6 L342 136.4 L337.2 131.6 Z M340.4 126.4 V129.4" fill="none" stroke="#bcbcbc" stroke-width="1.2"/>
<path d="M347.6 131.4 q1.8 2.4 1.6 4.2" fill="none" stroke="#bcbcbc" stroke-width="1.2"/>
<rect x="334.8" y="138.4" width="16.2" height="3.4" fill="#727272" shape-rendering="crispEdges"/>
<path d="M358.8 132.4 L361.6 135.2 L364.4 132.4" fill="none" stroke="#5e5e5e" stroke-width="1.3"/>
<text x="378.97" y="137" font-size="14.5" fill="#bcbcbc" textLength="10.26" lengthAdjust="spacingAndGlyphs">A</text>
<rect x="376" y="138.4" width="16" height="3.4" fill="#727272" shape-rendering="crispEdges"/>
<path d="M399.5 132.8 L402.5 135.8 L405.5 132.8" fill="none" stroke="#fff" stroke-width="1.6"/>
<path d="M178.4 164.5 H171 V171.9" fill="none" stroke="#d0d0d0" stroke-width="1"/>
<path d="M174 167.5 L178.4 171.9 M178.6 168.3 V172.1 H174.8" fill="none" stroke="#d0d0d0" stroke-width="1"/>
<path d="M414.9 164.5 H407.5 V171.9" fill="none" stroke="#5a5a5a" stroke-width="1"/>
<path d="M410.5 167.5 L414.9 171.9 M415.1 168.3 V172.1 H411.3" fill="none" stroke="#5a5a5a" stroke-width="1"/>
<path d="M716.9 164.5 H709.5 V171.9" fill="none" stroke="#5a5a5a" stroke-width="1"/>
<path d="M712.5 167.5 L716.9 171.9 M717.1 168.3 V172.1 H713.3" fill="none" stroke="#5a5a5a" stroke-width="1"/>
<path d="M878.9 164.5 H871.5 V171.9" fill="none" stroke="#5a5a5a" stroke-width="1"/>
<path d="M874.5 167.5 L878.9 171.9 M879.1 168.3 V172.1 H875.3" fill="none" stroke="#5a5a5a" stroke-width="1"/>
<rect x="432" y="94" width="14.4" height="1" fill="#bcbcbc" shape-rendering="crispEdges"/>
<rect x="434.736" y="98" width="8.928" height="1" fill="#bcbcbc" shape-rendering="crispEdges"/>
<rect x="432" y="102" width="14.4" height="1" fill="#bcbcbc" shape-rendering="crispEdges"/>
<rect x="457.6" y="97" width="14.4" height="1" fill="#bcbcbc" shape-rendering="crispEdges"/>
<rect x="460.336" y="101" width="8.928" height="1" fill="#bcbcbc" shape-rendering="crispEdges"/>
<rect x="457.6" y="105" width="14.4" height="1" fill="#bcbcbc" shape-rendering="crispEdges"/>
<rect x="483.4" y="101" width="15.4" height="1" fill="#bcbcbc" shape-rendering="crispEdges"/>
<rect x="486.326" y="105" width="9.548" height="1" fill="#bcbcbc" shape-rendering="crispEdges"/>
<rect x="483.4" y="109" width="15.4" height="1" fill="#bcbcbc" shape-rendering="crispEdges"/>
<rect x="432" y="127" width="14.4" height="1" fill="#bcbcbc" shape-rendering="crispEdges"/>
<rect x="432" y="131" width="8.928" height="1" fill="#bcbcbc" shape-rendering="crispEdges"/>
<rect x="432" y="135" width="14.4" height="1" fill="#bcbcbc" shape-rendering="crispEdges"/>
<rect x="432" y="139" width="8.928" height="1" fill="#bcbcbc" shape-rendering="crispEdges"/>
<rect x="457.6" y="127" width="14.4" height="1" fill="#bcbcbc" shape-rendering="crispEdges"/>
<rect x="460.336" y="131" width="8.928" height="1" fill="#bcbcbc" shape-rendering="crispEdges"/>
<rect x="457.6" y="135" width="14.4" height="1" fill="#bcbcbc" shape-rendering="crispEdges"/>
<rect x="460.336" y="139" width="8.928" height="1" fill="#bcbcbc" shape-rendering="crispEdges"/>
<rect x="483.4" y="127" width="15.4" height="1" fill="#bcbcbc" shape-rendering="crispEdges"/>
<rect x="489.252" y="131" width="9.548" height="1" fill="#bcbcbc" shape-rendering="crispEdges"/>
<rect x="483.4" y="135" width="15.4" height="1" fill="#bcbcbc" shape-rendering="crispEdges"/>
<rect x="489.252" y="139" width="9.548" height="1" fill="#bcbcbc" shape-rendering="crispEdges"/>
<text x="0" y="0" font-size="10.5" fill="#c6c6c6" transform="translate(516.2 106.4) rotate(-45)">ab</text>
<path d="M517.4 110 L527 100.2 M523.6 99.8 H527.4 V103.6" fill="none" stroke="#bcbcbc" stroke-width="1.1"/>
<path d="M533.4 100.8 L536.2 103.6 L539 100.8" fill="none" stroke="#5e5e5e" stroke-width="1.3"/>
<rect x="512.2" y="127" width="15.4" height="1" fill="#bcbcbc" shape-rendering="crispEdges"/>
<rect x="512.2" y="139" width="15.4" height="1" fill="#bcbcbc" shape-rendering="crispEdges"/>
<rect x="520.6" y="131" width="7" height="1" fill="#bcbcbc" shape-rendering="crispEdges"/>
<rect x="520.6" y="135" width="7" height="1" fill="#bcbcbc" shape-rendering="crispEdges"/>
<path d="M519 133.5 H512.8 M515.4 130.8 L512.6 133.5 L515.4 136.2" fill="none" stroke="#bcbcbc" stroke-width="1.1"/>
<rect x="538.4" y="127" width="15.4" height="1" fill="#bcbcbc" shape-rendering="crispEdges"/>
<rect x="538.4" y="139" width="15.4" height="1" fill="#bcbcbc" shape-rendering="crispEdges"/>
<rect x="546.8" y="131" width="7" height="1" fill="#bcbcbc" shape-rendering="crispEdges"/>
<rect x="546.8" y="135" width="7" height="1" fill="#bcbcbc" shape-rendering="crispEdges"/>
<path d="M538.6 133.5 H544.8 M542.2 130.8 L545 133.5 L542.2 136.2" fill="none" stroke="#bcbcbc" stroke-width="1.1"/>
<text x="576.91" y="102.6" font-size="10.5" fill="#bcbcbc" textLength="12.77" lengthAdjust="spacingAndGlyphs">ab</text>
<text x="577.19" y="110" font-size="10.5" fill="#bcbcbc" textLength="4.87" lengthAdjust="spacingAndGlyphs">c</text>
<path d="M590.2 100.6 V105 a2 2 0 0 1 -2 2 H584.2 M586.6 104.4 L584 107 L586.6 109.6" fill="none" stroke="#bcbcbc" stroke-width="1.1"/>
<rect x="575.6" y="126.8" width="14.4" height="13.8" fill="none" stroke="#c6c6c6" stroke-width="1.1"/>
<path d="M575.6 130.4 H590 M575.6 137 H590 M582.8 126.8 V130.4 M580 137 V140.6 M585.6 137 V140.6" fill="none" stroke="#bcbcbc" stroke-width="1"/>
<path d="M578 133.7 H587.6 M579.8 132 L578 133.7 L579.8 135.4 M585.8 132 L587.6 133.7 L585.8 135.4" fill="none" stroke="#bcbcbc" stroke-width="1"/>
<path d="M695.8 132.6 L698.6 135.4 L701.4 132.6" fill="none" stroke="#5e5e5e" stroke-width="1.3"/>
<path d="M865 101.2 L867.8 104 L870.6 101.2" fill="none" stroke="#5e5e5e" stroke-width="1.3"/>
<rect x="733.5" y="129.8" width="13" height="8.4" rx="0.8" fill="none" stroke="#c6c6c6" stroke-width="1.1"/>
<circle cx="738" cy="134" r="1.7" fill="none" stroke="#bcbcbc" stroke-width="1"/>
<path d="M742.2 134.4 h6.8 v6.6 h-6.8 z" fill="#292929" stroke="none"/>
<path d="M742.6 135.6 V140.2 a3 1.3 0 0 0 6 0 V135.6 M742.6 138 a3 1.3 0 0 0 6 0" fill="none" stroke="#bcbcbc" stroke-width="1"/>
<ellipse cx="745.6" cy="135.6" rx="3" ry="1.3" fill="none" stroke="#c6c6c6" stroke-width="1"/>
<path d="M756.8 132.6 L759.6 135.4 L762.4 132.6" fill="none" stroke="#5e5e5e" stroke-width="1.3"/>
<text x="773.73" y="141" font-size="19" fill="#cdcdcd" textLength="16.74" lengthAdjust="spacingAndGlyphs">%</text>
<text x="801.67" y="134.4" font-size="40" fill="#c4c4c4" font-weight="bold" style='font-family:"Liberation Serif", serif' textLength="12.82" lengthAdjust="spacingAndGlyphs">,</text>
<text x="838.81" y="133.4" font-size="9.5" fill="#bcbcbc" textLength="5.58" lengthAdjust="spacingAndGlyphs">0</text>
<text x="830.47" y="141.2" font-size="9.5" fill="#bcbcbc" textLength="14.12" lengthAdjust="spacingAndGlyphs">.00</text>
<path d="M836.8 130 H829.6 M832.2 127.4 L829.4 130 L832.2 132.6" fill="none" stroke="#bcbcbc" stroke-width="1.1"/>
<text x="856.49" y="133.4" font-size="9.5" fill="#bcbcbc" textLength="13.90" lengthAdjust="spacingAndGlyphs">.00</text>
<text x="861.87" y="141.2" font-size="9.5" fill="#bcbcbc" textLength="8.53" lengthAdjust="spacingAndGlyphs">.0</text>
<path d="M854.6 137.8 H861.6 M859 135.2 L861.8 137.8 L859 140.4" fill="none" stroke="#bcbcbc" stroke-width="1.1"/>
<rect x="919.6" y="90.8" width="13" height="7" fill="#8a8a8a" shape-rendering="crispEdges"/>
<rect x="919.6" y="97.8" width="8.6" height="7" fill="#8a8a8a" shape-rendering="crispEdges"/>
<rect x="919.6" y="104.8" width="13.4" height="6.6" fill="#8a8a8a" shape-rendering="crispEdges"/>
<rect x="928.4" y="97.8" width="8.4" height="3.4" fill="#3c3c3c" shape-rendering="crispEdges"/>
<rect x="914.6" y="90.8" width="27" height="20.6" fill="none" stroke="#bcbcbc" stroke-width="1.1"/>
<path d="M919.6 90.8 V111.4 M933 90.8 V111.4 M937.2 90.8 V111.4 M914.6 97.8 H941.6 M914.6 104.8 H941.6 " fill="none" stroke="#bcbcbc" stroke-width="1"/>
<rect x="987" y="98" width="12" height="6.6" fill="#6e6e6e" shape-rendering="crispEdges"/>
<rect x="999" y="104.6" width="10.4" height="6.6" fill="#8a8a8a" shape-rendering="crispEdges"/>
<rect x="982.2" y="90.8" width="27.4" height="20.6" fill="none" stroke="#bcbcbc" stroke-width="1.1"/>
<path d="M991.4 90.8 V111.4 M1000.6 90.8 V111.4 M982.2 97.8 H1009.6 M982.2 104.6 H1009.6 " fill="none" stroke="#bcbcbc" stroke-width="1"/>
<path d="M1011.6 97.6 L1003.4 108.6" fill="none" stroke="#292929" stroke-width="5"/>
<path d="M1011.6 97.4 L1003.6 108.4" fill="none" stroke="#bdbdbd" stroke-width="2.6" stroke-linecap="round"/>
<path d="M1003.8 108.4 q-2.4 1 -3.2 3.6 q-1 2.6 -4.4 3.2 q4.4 1.6 7.4 -0.4 q2.6 -1.8 2.6 -4.8 z" fill="#bdbdbd" stroke="none"/>
<path d="M955.7 141.8 L958.5 144.6 L961.3 141.8" fill="none" stroke="#5e5e5e" stroke-width="1.3"/>
<path d="M1007.8 141.8 L1010.6 144.6 L1013.4 141.8" fill="none" stroke="#5e5e5e" stroke-width="1.3"/>
<path d="M1251.4 117 H1258.6" fill="none" stroke="#f0f0f0" stroke-width="1.3"/>
<path d="M1251.8 119.2 L1255 122.4 L1258.2 119.2" fill="none" stroke="#f0f0f0" stroke-width="1.4"/>
<rect x="1292.8" y="90.6" width="28" height="21" fill="none" stroke="#b4b4b4" stroke-width="1.1"/>
<path d="M1302.2 90.6 V111.6 M1311.4 90.6 V111.6 M1292.8 97.6 H1320.8 M1292.8 104.6 H1320.8 " fill="none" stroke="#b4b4b4" stroke-width="1"/>
<rect x="1302" y="97.8" width="18.6" height="6.8" fill="#9a9a9a" shape-rendering="crispEdges"/>
<path d="M1311 101.2 H1292 M1296.6 96.6 L1291.6 101.2 L1296.6 105.8" fill="none" stroke="#b4b4b4" stroke-width="1.3"/>
<rect x="1337.4" y="90.6" width="28" height="21" fill="none" stroke="#b4b4b4" stroke-width="1.1"/>
<path d="M1346.8 90.6 V111.6 M1356 90.6 V111.6 M1337.4 97.6 H1365.4 M1337.4 104.6 H1365.4 " fill="none" stroke="#b4b4b4" stroke-width="1"/>
<rect x="1337.6" y="97.8" width="18.6" height="6.8" fill="#9a9a9a" shape-rendering="crispEdges"/>
<rect x="1356.6" y="96" width="10.6" height="10.6" fill="#292929" stroke="none"/>
<path d="M1357.6 96.6 L1366.6 105.8 M1366.6 96.6 L1357.6 105.8" fill="none" stroke="#b4b4b4" stroke-width="1.3"/>
<rect x="1381.4" y="90.6" width="27.6" height="21" fill="none" stroke="#b4b4b4" stroke-width="1.1"/>
<path d="M1388.8 90.6 V111.6 M1401.6 90.6 V111.6 M1381.4 97.6 H1409 M1381.4 104.6 H1409 " fill="none" stroke="#b4b4b4" stroke-width="1"/>
<rect x="1388.8" y="97.8" width="12.8" height="6.8" fill="#9a9a9a" shape-rendering="crispEdges"/>
<path d="M1387.2 85.6 H1403 M1387.2 84 V87.4 M1403 84 V87.4" fill="none" stroke="#b4b4b4" stroke-width="1"/>
<path d="M1304.1 143 L1306.9 145.8 L1309.7 143" fill="none" stroke="#5e5e5e" stroke-width="1.3"/>
<path d="M1347.6 143 L1350.4 145.8 L1353.2 143" fill="none" stroke="#5e5e5e" stroke-width="1.3"/>
<path d="M1392 143 L1394.8 145.8 L1397.6 143" fill="none" stroke="#5e5e5e" stroke-width="1.3"/>
<path d="M1450.8 90 V87.8 H1439.2 L1445.6 94.4 L1439.2 100.8 H1450.8 V98.6" fill="none" stroke="#f0f0f0" stroke-width="1.3"/>
<path d="M1524.2 92.6 L1527.4 95.8 L1530.6 92.6" fill="none" stroke="#fff" stroke-width="1.5"/>
<rect x="1437.6" y="113.8" width="14.6" height="12.8" fill="none" stroke="#a6a6a6" stroke-width="1.1"/>
<path d="M1437.6 116.6 H1452.2 M1444.9 118.4 V124.2 M1442.2 121.8 L1444.9 124.4 L1447.6 121.8" fill="none" stroke="#a6a6a6" stroke-width="1.1"/>
<path d="M1475.1 118.8 L1477.9 121.6 L1480.7 118.8" fill="none" stroke="#5e5e5e" stroke-width="1.3"/>
<path d="M1437.2 147.6 L1441.6 143.2 L1446.8 148.4 L1442.4 152.6 Z" fill="#b65fc9" stroke="#d58be4" stroke-width="1"/>
<path d="M1441.6 143.2 L1446.2 139.4 L1451.8 144.8 L1446.8 148.4" fill="none" stroke="#f0f0f0" stroke-width="1.2"/>
<path d="M1487.4 144.65 L1490.5 147.75 L1493.6 144.65" fill="none" stroke="#fff" stroke-width="1.5"/>
<text x="1549.37" y="99.4" font-size="13.5" fill="#a9a9a9" textLength="9.05" lengthAdjust="spacingAndGlyphs">A</text>
<text x="1549.31" y="113.6" font-size="13.5" fill="#a9a9a9" textLength="9.37" lengthAdjust="spacingAndGlyphs">Z</text>
<path d="M1561 94.6 H1576.8 L1570.8 101.6 V109.4 H1567.2 V101.6 Z" fill="none" stroke="#a9a9a9" stroke-width="1.2"/>
<path d="M1573.5 142.4 L1576.3 145.2 L1579.1 142.4" fill="none" stroke="#5e5e5e" stroke-width="1.3"/>
<circle cx="1612.4" cy="98.2" r="10" fill="none" stroke="#f0f0f0" stroke-width="1.3"/>
<path d="M1605.2 105.4 L1594.8 115.4" fill="none" stroke="#f0f0f0" stroke-width="1.3"/>
<path d="M1622.4 142.25 L1625.5 145.35 L1628.6 142.25" fill="none" stroke="#fff" stroke-width="1.5"/>
<rect x="1658.8" y="87.6" width="27" height="27" fill="none" stroke="#7a7a7a" stroke-width="1.1"/>
<rect x="1661.8" y="90.6" width="8.8" height="8.8" fill="none" stroke="#7a7a7a" stroke-width="1.1"/>
<rect x="1661.8" y="103" width="8.8" height="8.8" fill="none" stroke="#7a7a7a" stroke-width="1.1"/>
<rect x="1674.2" y="90.6" width="8.8" height="8.8" fill="none" stroke="#7a7a7a" stroke-width="1.1"/>
<rect x="1674.2" y="103" width="8.8" height="8.8" fill="none" stroke="#7a7a7a" stroke-width="1.1"/>
<path d="M1755 111.4 H1750 a1 1 0 0 1 -1 -1 V92 a1 1 0 0 1 1 -1 H1758.4 L1763.6 96.2 V101.4" fill="none" stroke="#2f7de1" stroke-width="1.7" stroke-linejoin="round"/>
<path d="M1758 91.4 V96.6 H1763.4" fill="none" stroke="#2f7de1" stroke-width="1.5"/>
<path d="M1759.6 108.4 V113.6 a1 1 0 0 0 1 1 H1770.6 a1 1 0 0 0 1 -1 V108.4" fill="none" stroke="#2f7de1" stroke-width="1.7"/>
<path d="M1765.6 111.6 V103.2 M1762.6 106 L1765.6 103 L1768.6 106" fill="none" stroke="#2f7de1" stroke-width="1.7"/>
</g>
<g id="formulabar">
<rect x="8.5" y="186.5" width="101" height="25" rx="4" fill="#282828" stroke="#6e6a6b" stroke-width="1"/>
<rect x="130.5" y="186.5" width="73" height="25" rx="4" fill="#282828" stroke="#6e6a6b" stroke-width="1"/>
<rect x="208.5" y="186.5" width="1703" height="25" rx="4" fill="#282828" stroke="#6e6a6b" stroke-width="1"/>
<text x="14.56" y="204" font-size="12.5" fill="#fff" textLength="22.59" lengthAdjust="spacingAndGlyphs">K18</text>
<path d="M94.5 198.2 L99.2 203 L104 198.2" fill="none" stroke="#e0e0e0" stroke-width="1.3"/>
<circle cx="120" cy="194" r="1" fill="#d0d0d0"/>
<circle cx="120" cy="199" r="1" fill="#d0d0d0"/>
<circle cx="120" cy="204" r="1" fill="#d0d0d0"/>
<path d="M138 193.5 L149.6 205 M149.6 193.5 L138 205" fill="none" stroke="#d0393b" stroke-width="1.5"/>
<path d="M159 199.5 L164 204.3 L175 193.4" fill="none" stroke="#4fa651" stroke-width="1.5"/>
<text x="184.4" y="204" font-size="18" fill="#e8e8e8" font-style="italic" style='font-family:"Liberation Serif", serif'>f<tspan font-size="15" dx="-0.8">x</tspan></text>
<text x="219.67" y="204" font-size="12.7" fill="#fff" textLength="209.20" lengthAdjust="spacingAndGlyphs">=SUMIFS(GL!I:I;GL!D:D;'Rekap RK'!</text>
<path d="M1897.3 195 L1902.6 200.2 L1908 195" fill="none" stroke="#e0e0e0" stroke-width="1.3"/>
<path d="M1892.5 162.2 L1897.7 167.2 L1903 162.2" fill="none" stroke="#e0e0e0" stroke-width="1.3"/>
</g>
<g id="sheettabs">
<rect x="0" y="978" width="1920" height="32" fill="#131415" shape-rendering="crispEdges"/>
<rect x="0" y="978" width="1920" height="1" fill="#050505" shape-rendering="crispEdges"/>
<rect x="0" y="1010" width="1920" height="1" fill="#444444" shape-rendering="crispEdges"/>
<path d="M34.6 989 L29 993.4 L34.6 997.8" fill="none" stroke="#c8c8c8" stroke-width="1.4"/>
<path d="M62 989 L67.6 993.4 L62 997.8" fill="none" stroke="#6e6e6e" stroke-width="1.4"/>
<circle cx="91.2" cy="993.4" r="1.1" fill="#e0e0e0"/>
<circle cx="95.4" cy="993.4" r="1.1" fill="#e0e0e0"/>
<circle cx="99.6" cy="993.4" r="1.1" fill="#e0e0e0"/>
<rect x="579.3" y="982" width="52" height="24.3" fill="#1fb14f" rx="4"/>
<rect x="640" y="982" width="44.3" height="24.3" fill="#ff0d0d" rx="4"/>
<rect x="693" y="982" width="83.3" height="24.3" fill="#ff0d0d" rx="4"/>
<path d="M353.8 978 H430.5 V1001.3 a5 5 0 0 1 -5 5 H358.8 a5 5 0 0 1 -5 -5 Z" fill="#ffffff"/>
<rect x="362.5" y="1000.4" width="59.5" height="2.4" fill="#1e7145" rx="1"/>
<rect x="237" y="985" width="1" height="18" fill="#606060" shape-rendering="crispEdges"/>
<rect x="350" y="985" width="1" height="18" fill="#606060" shape-rendering="crispEdges"/>
<rect x="434" y="985" width="1" height="18" fill="#606060" shape-rendering="crispEdges"/>
<rect x="574" y="985" width="1" height="18" fill="#606060" shape-rendering="crispEdges"/>
<rect x="634" y="985" width="1" height="18" fill="#606060" shape-rendering="crispEdges"/>
<rect x="688" y="985" width="1" height="18" fill="#606060" shape-rendering="crispEdges"/>
<rect x="780" y="985" width="1" height="18" fill="#606060" shape-rendering="crispEdges"/>
<rect x="821" y="985" width="1" height="18" fill="#606060" shape-rendering="crispEdges"/>
<rect x="863" y="985" width="1" height="18" fill="#606060" shape-rendering="crispEdges"/>
<rect x="904" y="985" width="1" height="18" fill="#606060" shape-rendering="crispEdges"/>
<rect x="983" y="985" width="1" height="18" fill="#606060" shape-rendering="crispEdges"/>
<text x="123.86" y="999" font-size="14.3" fill="#fff" textLength="99.54" lengthAdjust="spacingAndGlyphs">Rekening Koran</text>
<text x="250.13" y="999" font-size="14.3" fill="#fff" textLength="84.85" lengthAdjust="spacingAndGlyphs">Laporan Bank</text>
<text x="448.86" y="999" font-size="14.3" fill="#fff" textLength="112.05" lengthAdjust="spacingAndGlyphs">summary tahunan</text>
<text x="587.24" y="999" font-size="14.3" fill="#0b3d1b" textLength="35.33" lengthAdjust="spacingAndGlyphs">PP 23</text>
<text x="647.21" y="999" font-size="14.3" fill="#fff" textLength="28.80" lengthAdjust="spacingAndGlyphs">NRC</text>
<text x="700.95" y="999" font-size="14.3" fill="#fff" textLength="64.88" lengthAdjust="spacingAndGlyphs">RUGILABA</text>
<text x="793.51" y="999" font-size="14.3" fill="#fff" textLength="16.36" lengthAdjust="spacingAndGlyphs">TB</text>
<text x="833.15" y="999" font-size="14.3" fill="#fff" textLength="17.28" lengthAdjust="spacingAndGlyphs">GL</text>
<text x="875.94" y="999" font-size="14.3" fill="#fff" textLength="16.45" lengthAdjust="spacingAndGlyphs">LR</text>
<text x="917.25" y="999" font-size="14.3" fill="#fff" textLength="53.27" lengthAdjust="spacingAndGlyphs">NERACA</text>
<text x="361.82" y="996.3" font-size="13.4" fill="#1a1a1a" textLength="60.03" lengthAdjust="spacingAndGlyphs" stroke="#1a1a1a" stroke-width="0.45" stroke-linejoin="round">Rekap RK</text>
<path d="M1031.6 988 V999.5 M1025.8 993.7 H1037.4" fill="none" stroke="#a0a0a0" stroke-width="1.1"/>
<circle cx="1155" cy="990.4" r="1.1" fill="#e8e8e8"/>
<circle cx="1155" cy="995" r="1.1" fill="#e8e8e8"/>
<circle cx="1155" cy="999.6" r="1.1" fill="#e8e8e8"/>
<path d="M1183.2 989.2 V998.3 L1176 993.8 Z" fill="#a8a8a8"/>
<rect x="1188" y="989.2" width="659" height="9.2" fill="#a2a2a2" rx="4.6"/>
<path d="M1889 989.2 V998.3 L1896.2 993.8 Z" fill="#a8a8a8"/>
</g>
<g id="statusbar">
<rect x="0" y="1011" width="1920" height="21" fill="#141414" shape-rendering="crispEdges"/>
<text x="11.00" y="1025" font-size="12" fill="#fff" textLength="27.84" lengthAdjust="spacingAndGlyphs">Point</text>
<text x="80.28" y="1025" font-size="12" fill="#fff" textLength="126.24" lengthAdjust="spacingAndGlyphs" stroke="#ffffff" stroke-width="0.5" stroke-linejoin="round">Accessibility: Investigate</text>
<circle cx="68.5" cy="1015.6" r="1.7" fill="none" stroke="#e0e0e0" stroke-width="1"/>
<path d="M62 1018.8 L67 1020 H70 L75 1018.8 M67.2 1020 L66.6 1023 L63.6 1028 M69.8 1020 L70.4 1023 L71 1024" fill="none" stroke="#e0e0e0" stroke-width="1.1" stroke-linecap="round" stroke-linejoin="round"/>
<path d="M70.3 1023.6 L75.5 1028.4 M75.5 1023.6 L70.3 1028.4" fill="none" stroke="#e0e0e0" stroke-width="1.2"/>
<rect x="1633.5" y="1015" width="12.5" height="12" fill="none" stroke="#8c8c8c" stroke-width="1"/>
<path d="M1637.7 1015 V1027 M1641.9 1015 V1027 M1633.5 1019 H1646 M1633.5 1023 H1646" fill="none" stroke="#8c8c8c" stroke-width="1"/>
<rect x="1673.5" y="1015" width="13.5" height="12" fill="none" stroke="#8c8c8c" stroke-width="1"/>
<rect x="1676.5" y="1017.5" width="7.5" height="7.5" fill="none" stroke="#8c8c8c" stroke-width="1"/>
<path d="M1678 1020 H1682.6 M1678 1022.5 H1682.6" fill="none" stroke="#8c8c8c" stroke-width="1"/>
<path d="M1713.5 1027 V1015.5 H1716.5 V1021.5 H1723.5 V1015.5 H1726.5 V1027 Z M1716.5 1015.5 H1723.5" fill="none" stroke="#8c8c8c" stroke-width="1"/>
<path d="M1746.5 1020.7 H1753.5" fill="none" stroke="#6a6a6a" stroke-width="1.1"/>
<path d="M1759 1021.2 H1858.7" fill="none" stroke="#cfcfcf" stroke-width="1"/>
<path d="M1809.5 1017 V1025" fill="none" stroke="#cfcfcf" stroke-width="1.2"/>
<path d="M1864.3 1020.7 H1871.7 M1868 1017 V1024.4" fill="none" stroke="#6a6a6a" stroke-width="1.1"/>
<text x="1884.98" y="1025" font-size="12" fill="#5e5e5e" textLength="27.40" lengthAdjust="spacingAndGlyphs">100%</text>
</g>
<g id="taskbar">
<rect x="0" y="1032" width="1920" height="48" fill="url(#tb)" shape-rendering="crispEdges"/>
<rect x="0" y="1032" width="1920" height="1" fill="#4a4f4f" shape-rendering="crispEdges"/>
<path d="M24 1061 a5 5 0 0 1 -0.6 -9.9 a7.4 7.4 0 0 1 14.2 -1.4 a5.8 5.8 0 0 1 0.4 11.3 Z" fill="#b9c9ea"/>
<path d="M22 1061 a4.6 4.6 0 0 1 0.6 -9 a6 6 0 0 1 9 -2 c-3 3 -3 8 1 11 Z" fill="#d9e2f6"/>
<circle cx="38.7" cy="1046.5" r="6.8" fill="#f0858c"/>
<text x="35.54" y="1050.4" font-size="11" fill="#2a1a1a">1</text>
<text x="50.23" y="1052" font-size="12.5" fill="#fff" textLength="25.20" lengthAdjust="spacingAndGlyphs">26°C</text>
<text x="49.84" y="1067.5" font-size="12.5" fill="#cfd3d4" textLength="46.43" lengthAdjust="spacingAndGlyphs">Berawan</text>
<rect x="550.8" y="1045" width="11.2" height="11.2" fill="url(#win)" rx="1"/>
<rect x="563" y="1045" width="11.2" height="11.2" fill="url(#win)" rx="1"/>
<rect x="550.8" y="1057.2" width="11.2" height="11.2" fill="url(#win)" rx="1"/>
<rect x="563" y="1057.2" width="11.2" height="11.2" fill="url(#win)" rx="1"/>
<rect x="587" y="1040" width="220" height="32" rx="16" fill="#394145" stroke="#4a5256" stroke-width="1"/>
<circle cx="604.8" cy="1054.6" r="5.2" fill="none" stroke="#f0f0f0" stroke-width="1.6"/>
<path d="M608.6 1058.6 L612.6 1062.8" fill="none" stroke="#f0f0f0" stroke-width="1.8" stroke-linecap="round"/>
<text x="623.70" y="1060.8" font-size="14" fill="#e4e4e4" textLength="42.17" lengthAdjust="spacingAndGlyphs">Search</text>
<text x="1847.73" y="1051.8" font-size="12.5" fill="#fff" textLength="29.87" lengthAdjust="spacingAndGlyphs">09:52</text>
<text x="1815.33" y="1068" font-size="12.5" fill="#fff" textLength="62.22" lengthAdjust="spacingAndGlyphs">31/01/2026</text>
</g>
<g id="taskicons">
<ellipse cx="777.5" cy="1065.8" rx="22.5" ry="2.9" fill="#e9d2ad"/>
<path d="M761 1050.5 l2.6 -5.6 l3.4 -0.8 l2 2 q3 1.6 7 1.6 h8.6 q5 0.4 5.6 5 l0.2 12 h-2 l-0.6 -8 l-1.6 8 h-2 l0.6 -8.6 q-4 1 -9 0.2 l-0.2 8.6 h-2 l-0.8 -8 l-1 8 h-2 l0.2 -10 q-1.6 -2 -1.8 -4.6 l-3.8 2.6 z" fill="#d9d6e4"/>
<path d="M768 1047 l1.6 7 M771.4 1048 l1 8 M775 1048.6 l0.4 8 M778.6 1048.8 v8 M782.2 1048.8 l0.4 7.6 M785.6 1049.4 l1 6 M788 1052 l1 6 M770 1058 v5 M784 1058 v5" fill="none" stroke="#6c5a86" stroke-width="1.1"/>
<rect x="819.2" y="1051" width="17.6" height="15.6" fill="#707374" rx="1.5"/>
<rect x="825" y="1045" width="18" height="15.4" fill="#ececec" rx="1.5"/>
<rect x="825" y="1051" width="11.8" height="9.4" fill="#cfcfcf" shape-rendering="crispEdges"/>
<path d="M863 1047 a1.6 1.6 0 0 1 1.6 -1.6 h6 l2.4 2.2 h12.8 a1.6 1.6 0 0 1 1.6 1.6 v16 a1.4 1.4 0 0 1 -1.4 1.4 h-21.6 a1.4 1.4 0 0 1 -1.4 -1.4 z" fill="#e9a923"/>
<rect x="863" y="1049.6" width="24.4" height="17" fill="#fbd04c" rx="1.4"/>
<path d="M867.4 1066.6 v-4.4 a1.8 1.8 0 0 1 1.8 -1.8 h11.4 a1.8 1.8 0 0 1 1.8 1.8 v4.4 z" fill="#1f7bd6"/>
<rect x="872.4" y="1072.6" width="5.4" height="2.2" fill="#8c9294" rx="1.1"/>
<circle cx="919.2" cy="1056.1" r="12.3" fill="url(#edg)"/>
<path d="M919.2 1043.8 a12.3 12.3 0 0 1 12.2 11 q-1 5.6 -7.4 5.6 q-4 -0.4 -3.6 -3.6 q1.6 -3.4 -1.2 -6 q-4 -3 -9.6 0.6 q3 -6.6 9.6 -7.6 z" fill="#4bd06c"/>
<path d="M911 1052 q5 -3.4 8.6 -0.6 q2.6 2.4 1 5.6 q-0.6 3 3.4 3.6 q-3 4.6 -8 2.6 q-6 -3.4 -5 -11.2 z" fill="#123f7d"/>
<path d="M957.6 1049.6 v-2.4 a1.8 1.8 0 0 1 1.8 -1.8 h6.6 a1.8 1.8 0 0 1 1.8 1.8 v2.4" fill="none" stroke="#3a9be0" stroke-width="1.8"/>
<path d="M951.2 1049 h23 v15.6 a3.2 3.2 0 0 1 -3.2 3.2 h-16.6 a3.2 3.2 0 0 1 -3.2 -3.2 z" fill="#f1f3f5"/>
<rect x="958.2" y="1053.6" width="4" height="4" fill="#f25022" shape-rendering="crispEdges"/>
<rect x="963.2" y="1053.6" width="4" height="4" fill="#7fba00" shape-rendering="crispEdges"/>
<rect x="958.2" y="1058.6" width="4" height="4" fill="#00a4ef" shape-rendering="crispEdges"/>
<rect x="963.2" y="1058.6" width="4" height="4" fill="#ffb900" shape-rendering="crispEdges"/>
<path d="M1007.2 1044 a11.6 11.6 0 1 1 -5.8 21.6 l-5.8 1.8 l1.8 -5.6 a11.6 11.6 0 0 1 9.8 -17.8 z" fill="#1a2b26" stroke="#2bd56b" stroke-width="2.4" stroke-linejoin="round"/>
<path d="M1002.6 1050.4 l2.2 -0.8 l1.8 3.4 l-1.4 1.8 q1.6 3 4.8 4.6 l1.8 -1.4 l3.2 1.8 l-0.8 2.4 q-3.6 1.6 -8.2 -2.4 q-4.6 -4.6 -3.4 -9.4 z" fill="#2bd56b"/>
<circle cx="1051.3" cy="1055.7" r="12.1" fill="#e8453c"/>
<path d="M1051.3 1055.7 L1040.8 1049.7 A12.1 12.1 0 0 0 1051.3 1067.8 L1057.4 1059.2 Z" fill="#34a853"/>
<path d="M1051.3 1055.7 L1063.4 1055.7 A12.1 12.1 0 0 1 1051.3 1067.8 L1057.4 1059.2 Z" fill="#fbbc05"/>
<path d="M1051.3 1049.6 H1061.8 A12.1 12.1 0 0 1 1063.4 1055.7 A12.1 12.1 0 0 1 1051.3 1067.8 L1056.6 1058.7 Z" fill="#fbbc05"/>
<circle cx="1051.3" cy="1055.7" r="6" fill="#ffffff"/>
<circle cx="1051.3" cy="1055.7" r="4.6" fill="#3f7fe8"/>
<circle cx="1061.5" cy="1045.9" r="6.5" fill="#6d4b3d"/>
<text x="1058.96" y="1049" font-size="9.5" fill="#ffffff" font-weight="bold">k</text>
<rect x="1048.4" y="1072.6" width="5.4" height="2.2" fill="#8c9294" rx="1.1"/>
<rect x="1083" y="1044" width="18.2" height="17.8" fill="#f4f4f6" rx="2.6"/>
<path d="M1085.6 1046.6 H1095.6 M1085.6 1046.6 V1056.6" fill="none" stroke="#c8362c" stroke-width="2.2" stroke-dasharray="2.4 1.2"/>
<rect x="1088.4" y="1049.4" width="11" height="10.6" fill="#d9dde6" rx="1"/>
<path d="M1094.6 1055.6 L1103.6 1063.2 M1104.6 1056 L1096.4 1063.4" fill="none" stroke="#3a9ad9" stroke-width="1.5"/>
<circle cx="1105.2" cy="1056" r="1.9" fill="none" stroke="#3a9ad9" stroke-width="1.4"/>
<circle cx="1095.6" cy="1065.4" r="2.1" fill="none" stroke="#3a9ad9" stroke-width="1.4"/>
<rect x="1130" y="1043.8" width="18" height="24.2" fill="#5d7182" rx="1.6"/>
<rect x="1131.8" y="1045.6" width="14.4" height="4.8" fill="#4fc6ee" shape-rendering="crispEdges"/>
<rect x="1131.8" y="1052.2" width="3.9" height="3.9" fill="#cfd5d9" shape-rendering="crispEdges"/>
<rect x="1131.8" y="1057.2" width="3.9" height="3.9" fill="#cfd5d9" shape-rendering="crispEdges"/>
<rect x="1131.8" y="1062.2" width="3.9" height="3.9" fill="#cfd5d9" shape-rendering="crispEdges"/>
<rect x="1136.8" y="1052.2" width="3.9" height="3.9" fill="#cfd5d9" shape-rendering="crispEdges"/>
<rect x="1136.8" y="1057.2" width="3.9" height="3.9" fill="#cfd5d9" shape-rendering="crispEdges"/>
<rect x="1136.8" y="1062.2" width="3.9" height="3.9" fill="#cfd5d9" shape-rendering="crispEdges"/>
<rect x="1141.8" y="1052.2" width="3.9" height="3.9" fill="#cfd5d9" shape-rendering="crispEdges"/>
<rect x="1141.8" y="1057.2" width="3.9" height="3.9" fill="#2d5fb4" shape-rendering="crispEdges"/>
<rect x="1141.8" y="1062.2" width="3.9" height="3.9" fill="#2d5fb4" shape-rendering="crispEdges"/>
<rect x="1141.8" y="1057.2" width="3.9" height="8.9" fill="#2d5fb4" shape-rendering="crispEdges"/>
<rect x="1174" y="1046" width="18" height="19.4" fill="#3fa7e6" rx="1"/>
<rect x="1174" y="1065" width="18" height="2.2" fill="#cf8240" shape-rendering="crispEdges"/>
<path d="M1176 1045 V1047.4 M1179.4 1045 V1047.4 M1182.8 1045 V1047.4 M1186.2 1045 V1047.4 M1189.6 1045 V1047.4" fill="none" stroke="#bfe4fa" stroke-width="1.4"/>
<path d="M1176.6 1051.4 H1189.4 M1176.6 1055.4 H1189.4 M1176.6 1059.4 H1189.4" fill="none" stroke="#176db6" stroke-width="1.8"/>
<circle cx="1227.6" cy="1056" r="11.9" fill="#e93a54"/>
<path d="M1222.6 1062.6 L1227.6 1049 L1232.6 1062.6" fill="none" stroke="#ffffff" stroke-width="2.2" stroke-linejoin="miter" fill="none"/>
<rect x="1252" y="1036.3" width="37.4" height="39" rx="4" fill="#27353a" stroke="#3b494e" stroke-width="1"/>
<rect x="1263.6" y="1045" width="16.8" height="22" fill="#21a366" rx="1.6"/>
<path d="M1263.6 1046.6 a1.6 1.6 0 0 1 1.6 -1.6 h13.6 a1.6 1.6 0 0 1 1.6 1.6 v5.4 h-16.8 z" fill="#8fe27c"/>
<rect x="1272" y="1052" width="8.4" height="7.4" fill="#33c481" shape-rendering="crispEdges"/>
<rect x="1272" y="1059.4" width="8.4" height="7.6" fill="#185c37" shape-rendering="crispEdges"/>
<rect x="1263.6" y="1059.4" width="8.4" height="7.6" fill="#107c41" shape-rendering="crispEdges"/>
<rect x="1259" y="1053.4" width="11.4" height="11.4" fill="#107c41" rx="1.2"/>
<path d="M1262.2 1056.2 L1267.2 1062.2 M1267.2 1056.2 L1262.2 1062.2" fill="none" stroke="#fff" stroke-width="1.6"/>
<rect x="1264" y="1072.4" width="14.8" height="2.6" fill="#4cb4f2" rx="1.3"/>
<rect x="1303" y="1047" width="24.2" height="18" fill="#3d3d3d" rx="1.6"/>
<rect x="1303" y="1047" width="24.2" height="2.6" fill="#8d8d8d" shape-rendering="crispEdges"/>
<path d="M1306.6 1052.6 L1311.4 1056.6 L1306.6 1060.6" fill="none" stroke="#f0f0f0" stroke-width="1.8" fill="none"/>
<path d="M1313.6 1061 H1320.6" fill="none" stroke="#f0f0f0" stroke-width="1.8"/>
<rect x="1312.3" y="1072.6" width="5.4" height="2.2" fill="#8c9294" rx="1.1"/>
<path d="M1347.8 1044 l6.4 3.4 l5.1 -2.6 l5.1 2.6 l6.4 -3.4 v16.4 l-11.5 7.6 l-11.5 -7.6 z" fill="#d3313a"/>
<path d="M1352.6 1051.6 l6.7 3.6 l6.7 -3.6 v7 l-6.7 4.4 l-6.7 -4.4 z" fill="#1b2a2e"/>
<rect x="1356" y="1072.6" width="5.6" height="2.2" fill="#8c9294" rx="1.1"/>
<path d="M1697.4 1058.8 L1702.2 1054 L1707 1058.8" fill="none" stroke="#fff" stroke-width="1.6" fill="none" stroke-linecap="round" stroke-linejoin="round"/>
<path d="M1729.6 1060.8 a3.6 3.6 0 0 1 -0.4 -7.2 a5 5 0 0 1 9.2 -1.2 a4.2 4.2 0 0 1 0.4 8.4 z" fill="#8c8f90"/>
<path d="M1727.4 1049.2 L1740.6 1062.4" fill="none" stroke="#f0f0f0" stroke-width="1.3"/>
<rect x="1759" y="1049.2" width="10.6" height="10.6" rx="1" fill="none" stroke="#fff" stroke-width="1.2"/>
<path d="M1761.4 1063.6 H1767.4 M1764.4 1060 V1063.6" fill="none" stroke="#fff" stroke-width="1.2"/>
<rect x="1770.2" y="1048.6" width="3.4" height="4.6" rx="0.6" fill="#1b2629" stroke="#fff" stroke-width="1.1"/>
<path d="M1771.9 1053.4 V1064" fill="none" stroke="#fff" stroke-width="1.2"/>
<path d="M1782.4 1054.2 h2.6 l3.6 -3.4 v11.4 l-3.6 -3.4 h-2.6 z" fill="none" stroke="#fff" stroke-width="1.2" stroke-linejoin="round"/>
<path d="M1791 1053.6 q2 2.9 0 5.8 M1793.4 1051.6 q3.4 4.9 0 9.8 M1795.8 1049.8 q4.6 6.7 0 13.4" fill="none" stroke="#fff" stroke-width="1.2" fill="none" stroke-linecap="round"/>
<path d="M1886 1060.4 q1.8 -1.4 1.8 -4.6 q0 -5.4 4.6 -6 q4.6 0.6 4.6 6 q0 3.2 1.8 4.6 z" fill="#ffffff"/>
<path d="M1890.6 1062.6 a1.9 1.9 0 0 0 3.8 0" fill="none" stroke="#fff" stroke-width="1.3" fill="none"/>
<text x="1890.33" y="1058.4" font-size="7.5" fill="#1b2629" font-weight="bold">z</text>
<text x="1895.60" y="1053.4" font-size="8" fill="#ffffff" font-weight="bold">z</text>
</g>
</svg>
</body></html>
